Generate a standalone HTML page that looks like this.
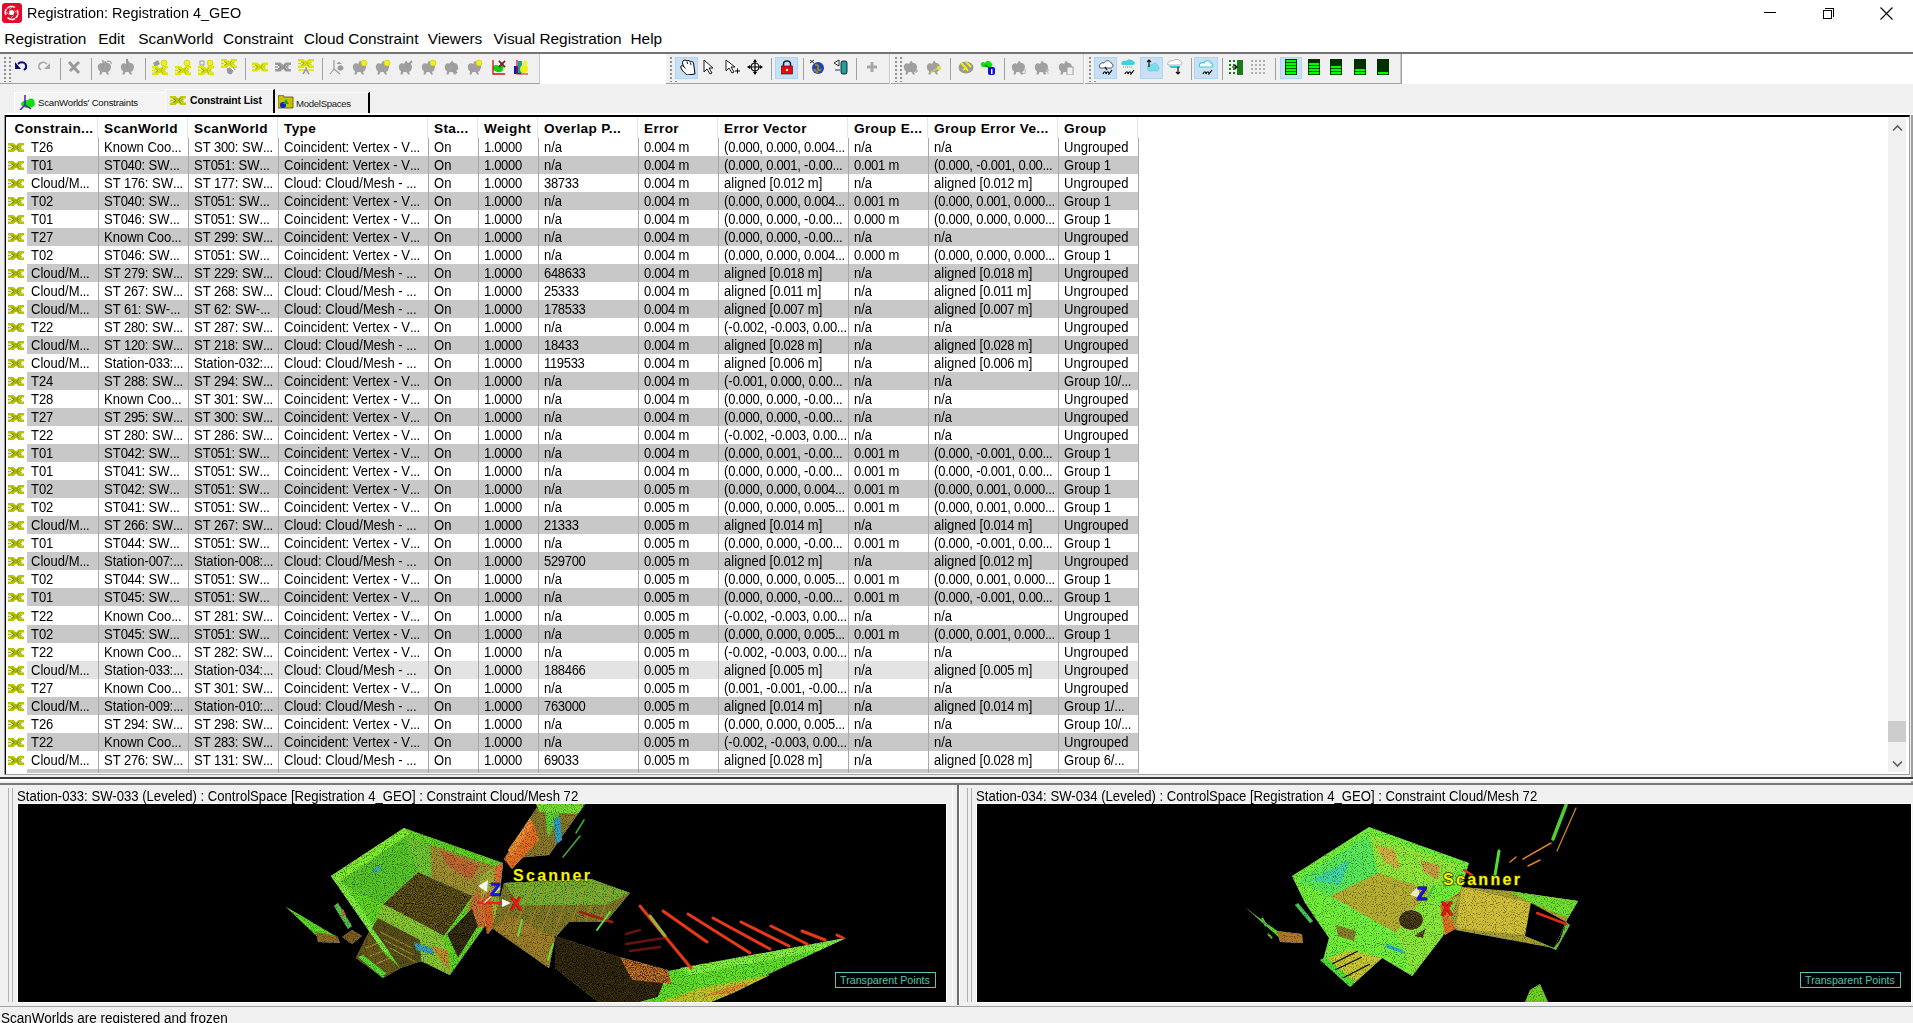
<!DOCTYPE html><html><head><meta charset="utf-8"><title>Registration</title><style>
*{margin:0;padding:0;box-sizing:border-box}
html,body{width:1913px;height:1023px;overflow:hidden;background:#f0f0f0;font-family:"Liberation Sans",sans-serif;color:#000}
.a{position:absolute}
.t{position:absolute;white-space:nowrap;line-height:1}
#rows .t{font-size:14px;color:#000;transform:scaleX(0.93);transform-origin:0 0}
#hdr .t{font-size:13.6px;font-weight:bold;color:#000;letter-spacing:0.35px}
i{font-style:normal;letter-spacing:-0.35px}
</style></head><body>
<div class="a" style="left:0;top:0;width:1913px;height:52px;background:#fff"></div>
<svg class="a" style="left:2px;top:3px" width="20" height="20" viewBox="0 0 20 20"><path d="M2 0 H18 L20 2 V18 L18 20 H2 L0 18 V2Z" fill="#e8082a"/><circle cx="9.5" cy="9.5" r="2.6" fill="#fff"/><path d="M5 5.5 A6 6 0 0 1 13 4.5 M15 7 A6.2 6.2 0 0 1 13.5 15 M13 15.5 A6 6 0 0 1 5.5 14.5 M3.8 12 A6 6 0 0 1 4.5 6" fill="none" stroke="#fff" stroke-width="1.5"/><path d="M7.5 6.5 L10 4 M12.5 7.5 L14.5 10 M11.5 12.5 L9 15 M6.5 11.5 L4.5 9" stroke="#f8c0c8" stroke-width="1"/></svg>
<div class="t" style="left:27px;top:5px;font-size:15px;color:#000;transform:scaleX(0.962);transform-origin:0 0">Registration: Registration 4_GEO</div>
<div class="a" style="left:1764px;top:12px;width:12px;height:1px;background:#000"></div>
<div class="a" style="left:1823px;top:10px;width:9px;height:9px;border:1px solid #000;background:#fff"></div>
<div class="a" style="left:1825px;top:8px;width:9px;height:9px;border-top:1px solid #000;border-right:1px solid #000"></div>
<svg class="a" style="left:1880px;top:7px" width="13" height="13"><path d="M0.5 0.5L12.5 12.5M12.5 0.5L0.5 12.5" stroke="#000" stroke-width="1.1"/></svg>
<div class="t" style="left:4.3px;top:31px;font-size:15.4px;color:#000">Registration</div>
<div class="t" style="left:98.3px;top:31px;font-size:15.4px;color:#000">Edit</div>
<div class="t" style="left:138.3px;top:31px;font-size:15.4px;color:#000">ScanWorld</div>
<div class="t" style="left:223.10000000000002px;top:31px;font-size:15.4px;color:#000">Constraint</div>
<div class="t" style="left:303.8px;top:31px;font-size:15.4px;color:#000">Cloud Constraint</div>
<div class="t" style="left:427.8px;top:31px;font-size:15.4px;color:#000">Viewers</div>
<div class="t" style="left:493.5px;top:31px;font-size:15.4px;color:#000">Visual Registration</div>
<div class="t" style="left:630.5px;top:31px;font-size:15.4px;color:#000">Help</div>
<div class="a" style="left:0;top:52px;width:1913px;height:2px;background:#747474"></div>
<div class="a" style="left:0;top:54px;width:1913px;height:30px;background:#fff"></div>
<div class="a" style="left:0px;top:54px;width:540px;height:30px;background:#f0f0f0;border-bottom:1px solid #a0a0a0;border-right:1px solid #c8c8c8"></div>
<div class="a" style="left:4px;top:57px;width:8px;height:25px;background-image:radial-gradient(circle at 1px 1px,#909090 0.9px,transparent 1.2px);background-size:5px 4px"></div>
<div class="a" style="left:666px;top:54px;width:224px;height:30px;background:#f0f0f0;border-bottom:1px solid #a0a0a0;border-right:1px solid #c8c8c8"></div>
<div class="a" style="left:670px;top:57px;width:8px;height:25px;background-image:radial-gradient(circle at 1px 1px,#909090 0.9px,transparent 1.2px);background-size:5px 4px"></div>
<div class="a" style="left:891px;top:54px;width:193px;height:30px;background:#f0f0f0;border-bottom:1px solid #a0a0a0;border-right:1px solid #c8c8c8"></div>
<div class="a" style="left:895px;top:57px;width:8px;height:25px;background-image:radial-gradient(circle at 1px 1px,#909090 0.9px,transparent 1.2px);background-size:5px 4px"></div>
<div class="a" style="left:1085px;top:54px;width:316px;height:30px;background:#f0f0f0;border-bottom:1px solid #a0a0a0;border-right:1px solid #c8c8c8"></div>
<div class="a" style="left:1089px;top:57px;width:8px;height:25px;background-image:radial-gradient(circle at 1px 1px,#909090 0.9px,transparent 1.2px);background-size:5px 4px"></div>
<div class="a" style="left:1401px;top:54px;width:1px;height:30px;background:#a0a0a0"></div>
<div class="a" style="left:60px;top:58px;width:1px;height:22px;background:#a0a0a0"></div>
<div class="a" style="left:91px;top:58px;width:1px;height:22px;background:#a0a0a0"></div>
<div class="a" style="left:145px;top:58px;width:1px;height:22px;background:#a0a0a0"></div>
<div class="a" style="left:245px;top:58px;width:1px;height:22px;background:#a0a0a0"></div>
<div class="a" style="left:322px;top:58px;width:1px;height:22px;background:#a0a0a0"></div>
<div class="a" style="left:771px;top:58px;width:1px;height:22px;background:#a0a0a0"></div>
<div class="a" style="left:803px;top:58px;width:1px;height:22px;background:#a0a0a0"></div>
<div class="a" style="left:856px;top:58px;width:1px;height:22px;background:#a0a0a0"></div>
<div class="a" style="left:950px;top:58px;width:1px;height:22px;background:#a0a0a0"></div>
<div class="a" style="left:1004px;top:58px;width:1px;height:22px;background:#a0a0a0"></div>
<div class="a" style="left:1191px;top:58px;width:1px;height:22px;background:#a0a0a0"></div>
<div class="a" style="left:1222px;top:58px;width:1px;height:22px;background:#a0a0a0"></div>
<div class="a" style="left:1275px;top:58px;width:1px;height:22px;background:#a0a0a0"></div>
<div class="a" style="left:675px;top:57px;width:23px;height:22px;background:#c8e0f6;border:1px solid #b0d4f2"></div>
<div class="a" style="left:775px;top:57px;width:23px;height:22px;background:#c8e0f6;border:1px solid #b0d4f2"></div>
<div class="a" style="left:1094px;top:57px;width:23px;height:22px;background:#c8e0f6;border:1px solid #b0d4f2"></div>
<div class="a" style="left:1140px;top:57px;width:23px;height:22px;background:#c8e0f6;border:1px solid #b0d4f2"></div>
<div class="a" style="left:1194px;top:57px;width:24px;height:22px;background:#c8e0f6;border:1px solid #b0d4f2"></div>
<div class="a" style="left:1280px;top:57px;width:22px;height:22px;background:#c8e0f6;border:1px solid #b0d4f2"></div>
<svg class="a" style="left:13px;top:59px" width="16" height="16" viewBox="0 0 16 16"><path d="M5 5 C8 2 14 3 13 9 L11 11" stroke="#0a0a80" stroke-width="2" fill="none"/><path d="M2 3 L2 10 L8 10 Z" fill="#0a0a80"/></svg>
<svg class="a" style="left:36px;top:59px" width="16" height="16" viewBox="0 0 16 16"><path d="M11 5 C8 2 2 3 3 9 L5 11" stroke="#a8a8a8" stroke-width="1.6" fill="none"/><path d="M14 4 L14 10 L8 10 Z" fill="#a8a8a8"/></svg>
<svg class="a" style="left:66px;top:59px" width="16" height="16" viewBox="0 0 16 16"><path d="M3 3 L13 14 M13 3 L6 10 L4 12" stroke="#9a9a9a" stroke-width="3" fill="none"/></svg>
<svg class="a" style="left:97px;top:59px" width="16" height="16" viewBox="0 0 16 16"><path d="M1 9 C0 5 4 3 6 5 L8 1.5 L10 4 C13 3.5 15 7 13.5 10 C13 12 12 12.5 11 13 L12 15.5 L10 15.5 L8.5 13 L5.5 13 L4.5 15.5 L2.5 15.5 L3 12 C1.5 11.5 1 10 1 9Z" fill="#a0a0a0"/><path d="M10 3 C12 1 15 3 14 5" stroke="#9a9a9a" stroke-width="1.2" fill="none"/><path d="M6 1 L6 8" stroke="#9a9a9a" stroke-width="1.5"/></svg>
<svg class="a" style="left:120px;top:59px" width="16" height="16" viewBox="0 0 16 16"><path d="M1 9 C0 5 4 3 6 5 L8 1.5 L10 4 C13 3.5 15 7 13.5 10 C13 12 12 12.5 11 13 L12 15.5 L10 15.5 L8.5 13 L5.5 13 L4.5 15.5 L2.5 15.5 L3 12 C1.5 11.5 1 10 1 9Z" fill="#a0a0a0"/><path d="M7 0 L7 8" stroke="#9a9a9a" stroke-width="2"/></svg>
<svg class="a" style="left:152px;top:59px" width="16" height="16" viewBox="0 0 16 16"><path d="M1 4 L6 1 L8 5 L3 8 Z" fill="#9a9a9a"/><circle cx="12" cy="4" r="3" fill="#f0f020" stroke="#c8c800" stroke-width="0.6"/><g transform="translate(0,7)"><path d="M0 1.2h5l3 3.3l3-3.3h5M0 7.8h5l3-3.3l3 3.3h5" stroke="#dce800" stroke-width="2.4" fill="none"/><path d="M0 4.5h3M3.5 2.3l3 2.2l-3 2.2M6.5 2.3l3 2.2l-3 2.2M13.5 2.8l-2.5 1.7l2.5 1.7" stroke="#d0dc00" stroke-width="1.7" fill="none"/><path d="M3 2.5l3 2l-3 2M11 1.5l-2 3l2 3" stroke="#8a9000" stroke-width="0.6" fill="none"/></g></svg>
<svg class="a" style="left:175px;top:59px" width="16" height="16" viewBox="0 0 16 16"><circle cx="12" cy="4" r="3" fill="#f0f020" stroke="#c8c800" stroke-width="0.6"/><g transform="translate(0,7)"><path d="M0 1.2h5l3 3.3l3-3.3h5M0 7.8h5l3-3.3l3 3.3h5" stroke="#dce800" stroke-width="2.4" fill="none"/><path d="M0 4.5h3M3.5 2.3l3 2.2l-3 2.2M6.5 2.3l3 2.2l-3 2.2M13.5 2.8l-2.5 1.7l2.5 1.7" stroke="#d0dc00" stroke-width="1.7" fill="none"/><path d="M3 2.5l3 2l-3 2M11 1.5l-2 3l2 3" stroke="#8a9000" stroke-width="0.6" fill="none"/></g></svg>
<svg class="a" style="left:198px;top:59px" width="16" height="16" viewBox="0 0 16 16"><rect x="2" y="2" width="4" height="4" fill="none" stroke="#9a9a9a"/><circle cx="12" cy="4" r="3" fill="#f0f020" stroke="#c8c800" stroke-width="0.6"/><g transform="translate(0,7)"><path d="M0 1.2h5l3 3.3l3-3.3h5M0 7.8h5l3-3.3l3 3.3h5" stroke="#dce800" stroke-width="2.4" fill="none"/><path d="M0 4.5h3M3.5 2.3l3 2.2l-3 2.2M6.5 2.3l3 2.2l-3 2.2M13.5 2.8l-2.5 1.7l2.5 1.7" stroke="#d0dc00" stroke-width="1.7" fill="none"/><path d="M3 2.5l3 2l-3 2M11 1.5l-2 3l2 3" stroke="#8a9000" stroke-width="0.6" fill="none"/></g></svg>
<svg class="a" style="left:221px;top:59px" width="16" height="16" viewBox="0 0 16 16"><path d="M0 1.2h5l3 3.3l3-3.3h5M0 7.8h5l3-3.3l3 3.3h5" stroke="#dce800" stroke-width="2.4" fill="none"/><path d="M0 4.5h3M3.5 2.3l3 2.2l-3 2.2M6.5 2.3l3 2.2l-3 2.2M13.5 2.8l-2.5 1.7l2.5 1.7" stroke="#d0dc00" stroke-width="1.7" fill="none"/><path d="M3 2.5l3 2l-3 2M11 1.5l-2 3l2 3" stroke="#8a9000" stroke-width="0.6" fill="none"/><path d="M6 10 L9 9 L12 12 L10 15 L7 14 Z M12 8 L14 11" fill="#9a9a9a" stroke="#9a9a9a"/></svg>
<svg class="a" style="left:252px;top:59px" width="16" height="16" viewBox="0 0 16 16"><g transform="translate(0,3.5)"><path d="M0 1.2h5l3 3.3l3-3.3h5M0 7.8h5l3-3.3l3 3.3h5" stroke="#dce800" stroke-width="2.4" fill="none"/><path d="M0 4.5h3M3.5 2.3l3 2.2l-3 2.2M6.5 2.3l3 2.2l-3 2.2M13.5 2.8l-2.5 1.7l2.5 1.7" stroke="#d0dc00" stroke-width="1.7" fill="none"/><path d="M3 2.5l3 2l-3 2M11 1.5l-2 3l2 3" stroke="#8a9000" stroke-width="0.6" fill="none"/></g></svg>
<svg class="a" style="left:275px;top:59px" width="16" height="16" viewBox="0 0 16 16"><g transform="translate(0,3.5)"><path d="M0 1.2h5l3 3.3l3-3.3h5M0 7.8h5l3-3.3l3 3.3h5" stroke="#9a9a9a" stroke-width="2.4" fill="none"/><path d="M0 4.5h3M3.5 2.3l3 2.2l-3 2.2M6.5 2.3l3 2.2l-3 2.2M13.5 2.8l-2.5 1.7l2.5 1.7" stroke="#9a9a9a" stroke-width="1.7" fill="none"/><path d="M3 2.5l3 2l-3 2M11 1.5l-2 3l2 3" stroke="#707070" stroke-width="0.6" fill="none"/></g></svg>
<svg class="a" style="left:298px;top:59px" width="16" height="16" viewBox="0 0 16 16"><path d="M0 1.2h5l3 3.3l3-3.3h5M0 7.8h5l3-3.3l3 3.3h5" stroke="#dce800" stroke-width="2.4" fill="none"/><path d="M0 4.5h3M3.5 2.3l3 2.2l-3 2.2M6.5 2.3l3 2.2l-3 2.2M13.5 2.8l-2.5 1.7l2.5 1.7" stroke="#d0dc00" stroke-width="1.7" fill="none"/><path d="M3 2.5l3 2l-3 2M11 1.5l-2 3l2 3" stroke="#8a9000" stroke-width="0.6" fill="none"/><path d="M0 11h16" stroke="#dce800" stroke-width="1.5"/><path d="M5 15 L8 10 L11 15 M8 10 L8 8" stroke="#9a9a9a" stroke-width="1.5" fill="none"/></svg>
<svg class="a" style="left:329px;top:59px" width="16" height="16" viewBox="0 0 16 16"><path d="M5 1 L5 10 L1 15 M5 10 L11 15" stroke="#9a9a9a" stroke-width="1.2" fill="none"/><path d="M9 9 C9 6 14 6 14 9 C14 12 9 12 9 9Z M8 5 C9 3 11 3 12 5" fill="#9a9a9a" stroke="#9a9a9a"/></svg>
<svg class="a" style="left:352px;top:59px" width="16" height="16" viewBox="0 0 16 16"><path d="M1 9 C0 5 4 3 6 5 L8 1.5 L10 4 C13 3.5 15 7 13.5 10 C13 12 12 12.5 11 13 L12 15.5 L10 15.5 L8.5 13 L5.5 13 L4.5 15.5 L2.5 15.5 L3 12 C1.5 11.5 1 10 1 9Z" fill="#a0a0a0"/><circle cx="12" cy="4" r="3" fill="#f0f020" stroke="#c8c800" stroke-width="0.6"/></svg>
<svg class="a" style="left:375px;top:59px" width="16" height="16" viewBox="0 0 16 16"><path d="M1 9 C0 5 4 3 6 5 L8 1.5 L10 4 C13 3.5 15 7 13.5 10 C13 12 12 12.5 11 13 L12 15.5 L10 15.5 L8.5 13 L5.5 13 L4.5 15.5 L2.5 15.5 L3 12 C1.5 11.5 1 10 1 9Z" fill="#a0a0a0"/><circle cx="12" cy="4" r="3" fill="#f0f020" stroke="#c8c800" stroke-width="0.6"/></svg>
<svg class="a" style="left:421px;top:59px" width="16" height="16" viewBox="0 0 16 16"><path d="M1 9 C0 5 4 3 6 5 L8 1.5 L10 4 C13 3.5 15 7 13.5 10 C13 12 12 12.5 11 13 L12 15.5 L10 15.5 L8.5 13 L5.5 13 L4.5 15.5 L2.5 15.5 L3 12 C1.5 11.5 1 10 1 9Z" fill="#a0a0a0"/><circle cx="12" cy="4" r="3" fill="#f0f020" stroke="#c8c800" stroke-width="0.6"/></svg>
<svg class="a" style="left:467px;top:59px" width="16" height="16" viewBox="0 0 16 16"><path d="M1 9 C0 5 4 3 6 5 L8 1.5 L10 4 C13 3.5 15 7 13.5 10 C13 12 12 12.5 11 13 L12 15.5 L10 15.5 L8.5 13 L5.5 13 L4.5 15.5 L2.5 15.5 L3 12 C1.5 11.5 1 10 1 9Z" fill="#a0a0a0"/><circle cx="12" cy="4" r="3" fill="#f0f020" stroke="#c8c800" stroke-width="0.6"/></svg>
<svg class="a" style="left:398px;top:59px" width="16" height="16" viewBox="0 0 16 16"><path d="M1 9 C0 5 4 3 6 5 L8 1.5 L10 4 C13 3.5 15 7 13.5 10 C13 12 12 12.5 11 13 L12 15.5 L10 15.5 L8.5 13 L5.5 13 L4.5 15.5 L2.5 15.5 L3 12 C1.5 11.5 1 10 1 9Z" fill="#a0a0a0"/><path d="M8 8 L14 2" stroke="#9a9a9a" stroke-width="2"/></svg>
<svg class="a" style="left:444px;top:59px" width="16" height="16" viewBox="0 0 16 16"><path d="M1 9 C0 5 4 3 6 5 L8 1.5 L10 4 C13 3.5 15 7 13.5 10 C13 12 12 12.5 11 13 L12 15.5 L10 15.5 L8.5 13 L5.5 13 L4.5 15.5 L2.5 15.5 L3 12 C1.5 11.5 1 10 1 9Z" fill="#a0a0a0"/><path d="M6 4 L14 10 M8 10 L13 14" stroke="#9a9a9a" stroke-width="2"/></svg>
<svg class="a" style="left:490px;top:59px" width="16" height="16" viewBox="0 0 16 16"><path d="M3 10 C2 6 7 5 9 7 C11 4 15 7 13 11 C12 14 5 14 3 10Z" fill="#10d010"/><path d="M3 1 L3 15 L15 15 M9 2 L15 8 M15 2 L9 8" stroke="#d01010" stroke-width="1.3" fill="none"/><path d="M9 2 L15 8 M15 2 L9 8" stroke="#702020" stroke-width="1.6"/></svg>
<svg class="a" style="left:513px;top:59px" width="16" height="16" viewBox="0 0 16 16"><rect x="1" y="7" width="7" height="8" fill="#1010c0"/><rect x="5" y="2" width="4" height="12" fill="#10a0a0"/><circle cx="11" cy="10" r="4" fill="#f0f010"/><circle cx="12" cy="4" r="2.5" fill="#f0f040"/><path d="M4 1 L4 15 L15 15" stroke="#d01010" stroke-width="1.2" fill="none"/></svg>
<svg class="a" style="left:680px;top:59px" width="16" height="16" viewBox="0 0 16 16"><path d="M7 16 C5 14 2 12 1 9 C0 7 2 6 3 7 L4 8 C3 6 2 4 3 2 C4 0.5 6 1 7 2 C8 1 10 1.5 10.5 3 C11.5 2 13 2.5 13.5 4 L15 15 Z" fill="#fff" stroke="#000" stroke-width="1"/><path d="M4 8 L5.5 9.5 M7 2.5 L7.5 5 M10.5 3.5 L11 6" stroke="#000" stroke-width="0.9"/></svg>
<svg class="a" style="left:701px;top:59px" width="16" height="16" viewBox="0 0 16 16"><path d="M3 1 L3 13 L6 10 L9 15 L11 14 L8 9 L12 9 Z" fill="#fff" stroke="#000" stroke-width="0.9"/></svg>
<svg class="a" style="left:724px;top:59px" width="16" height="16" viewBox="0 0 16 16"><path d="M2 1 L2 12 L5 9 L8 14 L10 13 L7 8 L11 8 Z" fill="#fff" stroke="#000" stroke-width="0.9"/><path d="M11 12h5M13.5 9.5v5" stroke="#000" stroke-width="1"/></svg>
<svg class="a" style="left:747px;top:59px" width="16" height="16" viewBox="0 0 16 16"><path d="M8 1 L8 15 M1 8 L15 8" stroke="#000" stroke-width="1.2"/><path d="M8 0 L10 3 L6 3Z M8 16 L10 13 L6 13Z M0 8 L3 6 L3 10Z M16 8 L13 6 L13 10Z" fill="#000"/><circle cx="8" cy="8" r="4" fill="none" stroke="#000" stroke-width="1.2"/></svg>
<svg class="a" style="left:779px;top:59px" width="16" height="16" viewBox="0 0 16 16"><path d="M4.5 7 L4.5 5 C4.5 1 11.5 1 11.5 5 L11.5 7" stroke="#222" stroke-width="1.6" fill="none"/><rect x="2.5" y="7" width="11" height="8" fill="#e01010" stroke="#400" stroke-width="0.6"/><rect x="7" y="10" width="2" height="2" fill="#fff"/></svg>
<svg class="a" style="left:809px;top:59px" width="16" height="16" viewBox="0 0 16 16"><circle cx="9" cy="9" r="6" fill="#2040c0"/><path d="M6 6 C8 5 10 7 9 9 C8 11 11 12 12 10 M5 10 C6 12 8 13 9 14" stroke="#909020" stroke-width="2" fill="none"/><path d="M1 1 L5 4 M1 4 L5 1" stroke="#000" stroke-width="0.8"/></svg>
<svg class="a" style="left:833px;top:59px" width="16" height="16" viewBox="0 0 16 16"><rect x="8" y="2" width="6" height="13" rx="2" fill="#20a0a0" stroke="#000" stroke-width="0.8"/><path d="M1 4 L6 1 L6 7Z M2 11 L7 11" stroke="#000" stroke-width="0.8" fill="none"/></svg>
<svg class="a" style="left:864px;top:59px" width="16" height="16" viewBox="0 0 16 16"><path d="M8 3 L8 13 M3 8 L13 8" stroke="#a8a8a8" stroke-width="3"/></svg>
<svg class="a" style="left:903px;top:59px" width="16" height="16" viewBox="0 0 16 16"><path d="M1 9 C0 5 4 3 6 5 L8 1.5 L10 4 C13 3.5 15 7 13.5 10 C13 12 12 12.5 11 13 L12 15.5 L10 15.5 L8.5 13 L5.5 13 L4.5 15.5 L2.5 15.5 L3 12 C1.5 11.5 1 10 1 9Z" fill="#a0a0a0"/><path d="M11 12h4M13 10v4" stroke="#a0a0a0" stroke-width="1"/></svg>
<svg class="a" style="left:926px;top:59px" width="16" height="16" viewBox="0 0 16 16"><path d="M1 9 C0 5 4 3 6 5 L8 1.5 L10 4 C13 3.5 15 7 13.5 10 C13 12 12 12.5 11 13 L12 15.5 L10 15.5 L8.5 13 L5.5 13 L4.5 15.5 L2.5 15.5 L3 12 C1.5 11.5 1 10 1 9Z" fill="#a0a0a0"/><path d="M4 14 L12 9" stroke="#c8c860" stroke-width="1.5"/><circle cx="13" cy="9" r="2.2" fill="#e0e040"/></svg>
<svg class="a" style="left:958px;top:59px" width="16" height="16" viewBox="0 0 16 16"><ellipse cx="8" cy="8.5" rx="7.5" ry="6" fill="#9a9a9a"/><path d="M3 4 L8 9 M8 3 L13 8 M5 11 L8 9 L10 12" stroke="#f0f000" stroke-width="1.8" fill="none"/></svg>
<svg class="a" style="left:980px;top:59px" width="16" height="16" viewBox="0 0 16 16"><path d="M1 6 C0 3 4 2 5 4 C6 1 10 1 11 4 C13 4 13 7 11 8 L3 8 C1 8 1 6 1 6Z" fill="#10e010"/><path d="M5 6 L9 9" stroke="#000" stroke-width="1"/><rect x="8" y="8" width="7" height="8" rx="2" fill="#1010d0"/><rect x="11" y="10" width="1.5" height="5" fill="#fff"/></svg>
<svg class="a" style="left:1011px;top:59px" width="16" height="16" viewBox="0 0 16 16"><path d="M1 9 C0 5 4 3 6 5 L8 1.5 L10 4 C13 3.5 15 7 13.5 10 C13 12 12 12.5 11 13 L12 15.5 L10 15.5 L8.5 13 L5.5 13 L4.5 15.5 L2.5 15.5 L3 12 C1.5 11.5 1 10 1 9Z" fill="#a0a0a0"/><text x="10" y="15" font-size="7" fill="#a0a0a0" font-family="Liberation Sans">U</text></svg>
<svg class="a" style="left:1034px;top:59px" width="16" height="16" viewBox="0 0 16 16"><path d="M1 9 C0 5 4 3 6 5 L8 1.5 L10 4 C13 3.5 15 7 13.5 10 C13 12 12 12.5 11 13 L12 15.5 L10 15.5 L8.5 13 L5.5 13 L4.5 15.5 L2.5 15.5 L3 12 C1.5 11.5 1 10 1 9Z" fill="#a0a0a0"/><text x="10" y="15" font-size="7" fill="#a0a0a0" font-family="Liberation Sans">R</text></svg>
<svg class="a" style="left:1058px;top:59px" width="16" height="16" viewBox="0 0 16 16"><path d="M1 9 C0 5 4 3 6 5 L8 1.5 L10 4 C13 3.5 15 7 13.5 10 C13 12 12 12.5 11 13 L12 15.5 L10 15.5 L8.5 13 L5.5 13 L4.5 15.5 L2.5 15.5 L3 12 C1.5 11.5 1 10 1 9Z" fill="#a0a0a0"/><rect x="9" y="8" width="6" height="8" fill="#f0f0f0" stroke="#a0a0a0"/></svg>
<svg class="a" style="left:1098px;top:59px" width="16" height="16" viewBox="0 0 16 16"><path d="M2 9 C0 6 3 3 6 4 C7 1 12 1 13 4 C16 5 15 9 13 9 Z" fill="#fff" stroke="#555" stroke-width="1"/><path d="M7 8 L9 11 M5 15 C6 12 8 12 8 15 C9 12 11 12 11 15 L14 11" stroke="#000" stroke-width="1.2" fill="none"/></svg>
<svg class="a" style="left:1120px;top:59px" width="16" height="16" viewBox="0 0 16 16"><path d="M2 6 C0 3 3 1 6 2 C7 0 12 0 13 2 C16 3 15 6 13 6 Z" fill="#40d0e0"/><path d="M3 8 L13 8" stroke="#888" stroke-dasharray="1 1"/><path d="M5 15 C6 12 8 12 8 15 C9 12 11 12 11 15 L14 11" stroke="#000" stroke-width="1.2" fill="none"/></svg>
<svg class="a" style="left:1144px;top:59px" width="16" height="16" viewBox="0 0 16 16"><path d="M4 9 C2 7 5 5 8 6 C9 3 14 4 14 7 C16 8 15 12 13 12 L6 12 C3 12 3 10 4 9Z" fill="#70e0f0" stroke="#aaa" stroke-width="0.6"/><path d="M5 1 L5 8 M3 3 L5 1 L7 3" stroke="#000" stroke-width="1.1" fill="none"/></svg>
<svg class="a" style="left:1167px;top:59px" width="16" height="16" viewBox="0 0 16 16"><path d="M1 6 C0 3 3 1 6 2 C7 0 12 0 13 2 C16 3 15 6 13 6 L3 6Z" fill="#fff" stroke="#888" stroke-width="0.6"/><path d="M2 7 L13 7 L13 9 L4 9Z" fill="#30c8d8"/><path d="M11 8 L11 15 M9 13 L11 15 L13 13" stroke="#000" stroke-width="1.1" fill="none"/></svg>
<svg class="a" style="left:1198px;top:59px" width="16" height="16" viewBox="0 0 16 16"><path d="M2 8 C0 5 3 3 6 4 C7 1 12 1 13 4 C16 5 15 8 13 8 Z" fill="#fff" stroke="#40c8d8" stroke-width="1.2"/><path d="M5 15 C6 12 8 12 8 15 C9 12 11 12 11 15 L14 11" stroke="#000" stroke-width="1.2" fill="none"/></svg>
<svg class="a" style="left:1228px;top:59px" width="16" height="16" viewBox="0 0 16 16"><rect x="1" y="1" width="2" height="2" fill="#1a7a1a"/><rect x="1" y="5" width="2" height="2" fill="#1a7a1a"/><rect x="1" y="9" width="2" height="2" fill="#1a7a1a"/><rect x="1" y="13" width="2" height="2" fill="#1a7a1a"/><rect x="5" y="1" width="2" height="2" fill="#1a7a1a"/><rect x="5" y="5" width="2" height="2" fill="#1a7a1a"/><rect x="5" y="9" width="2" height="2" fill="#1a7a1a"/><rect x="5" y="13" width="2" height="2" fill="#1a7a1a"/><rect x="9" y="1" width="2" height="2" fill="#1a7a1a"/><rect x="9" y="5" width="2" height="2" fill="#1a7a1a"/><rect x="9" y="9" width="2" height="2" fill="#1a7a1a"/><rect x="9" y="13" width="2" height="2" fill="#1a7a1a"/><rect x="13" y="1" width="2" height="2" fill="#1a7a1a"/><rect x="13" y="5" width="2" height="2" fill="#1a7a1a"/><rect x="13" y="9" width="2" height="2" fill="#1a7a1a"/><rect x="13" y="13" width="2" height="2" fill="#1a7a1a"/><rect x="9" y="1" width="6" height="15" fill="#1a7a1a"/><path d="M4 8 L9 8 M7 6 L9 8 L7 10" stroke="#000" stroke-width="1.1" fill="none"/></svg>
<svg class="a" style="left:1250px;top:59px" width="16" height="16" viewBox="0 0 16 16"><rect x="1" y="1" width="2" height="2" fill="#b0b0b0"/><rect x="1" y="5" width="2" height="2" fill="#b0b0b0"/><rect x="1" y="9" width="2" height="2" fill="#b0b0b0"/><rect x="1" y="13" width="2" height="2" fill="#b0b0b0"/><rect x="5" y="1" width="2" height="2" fill="#b0b0b0"/><rect x="5" y="5" width="2" height="2" fill="#b0b0b0"/><rect x="5" y="9" width="2" height="2" fill="#b0b0b0"/><rect x="5" y="13" width="2" height="2" fill="#b0b0b0"/><rect x="9" y="1" width="2" height="2" fill="#b0b0b0"/><rect x="9" y="5" width="2" height="2" fill="#b0b0b0"/><rect x="9" y="9" width="2" height="2" fill="#b0b0b0"/><rect x="9" y="13" width="2" height="2" fill="#b0b0b0"/><rect x="13" y="1" width="2" height="2" fill="#b0b0b0"/><rect x="13" y="5" width="2" height="2" fill="#b0b0b0"/><rect x="13" y="9" width="2" height="2" fill="#b0b0b0"/><rect x="13" y="13" width="2" height="2" fill="#b0b0b0"/></svg>
<svg class="a" style="left:1283px;top:59px" width="16" height="16" viewBox="0 0 16 16"><rect x="2" y="0" width="12" height="16" fill="#003300"/><rect x="3" y="1" width="10" height="2.2" fill="#00ff00"/><rect x="3" y="4" width="10" height="2.2" fill="#00ff00"/><rect x="3" y="7" width="10" height="2.2" fill="#00ff00"/><rect x="3" y="10" width="10" height="2.2" fill="#00ff00"/><rect x="3" y="13" width="10" height="2.2" fill="#00ff00"/></svg>
<svg class="a" style="left:1306px;top:59px" width="16" height="16" viewBox="0 0 16 16"><rect x="2" y="0" width="12" height="16" fill="#003300"/><rect x="3" y="1" width="10" height="2.2" fill="#003000"/><rect x="3" y="4" width="10" height="2.2" fill="#00ff00"/><rect x="3" y="7" width="10" height="2.2" fill="#00ff00"/><rect x="3" y="10" width="10" height="2.2" fill="#00ff00"/><rect x="3" y="13" width="10" height="2.2" fill="#00ff00"/></svg>
<svg class="a" style="left:1328px;top:59px" width="16" height="16" viewBox="0 0 16 16"><rect x="2" y="0" width="12" height="16" fill="#003300"/><rect x="3" y="1" width="10" height="2.2" fill="#003000"/><rect x="3" y="4" width="10" height="2.2" fill="#003000"/><rect x="3" y="7" width="10" height="2.2" fill="#00ff00"/><rect x="3" y="10" width="10" height="2.2" fill="#00ff00"/><rect x="3" y="13" width="10" height="2.2" fill="#00ff00"/></svg>
<svg class="a" style="left:1352px;top:59px" width="16" height="16" viewBox="0 0 16 16"><rect x="2" y="0" width="12" height="16" fill="#003300"/><rect x="3" y="1" width="10" height="2.2" fill="#003000"/><rect x="3" y="4" width="10" height="2.2" fill="#003000"/><rect x="3" y="7" width="10" height="2.2" fill="#003000"/><rect x="3" y="10" width="10" height="2.2" fill="#00ff00"/><rect x="3" y="13" width="10" height="2.2" fill="#00ff00"/></svg>
<svg class="a" style="left:1375px;top:59px" width="16" height="16" viewBox="0 0 16 16"><rect x="2" y="0" width="12" height="16" fill="#003300"/><rect x="3" y="1" width="10" height="2.2" fill="#003000"/><rect x="3" y="4" width="10" height="2.2" fill="#003000"/><rect x="3" y="7" width="10" height="2.2" fill="#003000"/><rect x="3" y="10" width="10" height="2.2" fill="#003000"/><rect x="3" y="13" width="10" height="2.2" fill="#00ff00"/></svg>
<div class="a" style="left:0;top:84px;width:1913px;height:31px;background:#f0f0f0"></div>
<div class="a" style="left:14px;top:92px;width:150px;height:23px;background:#f4f4f4;border-left:1px solid #fff;border-top:1px solid #fff"></div>
<div class="a" style="left:165px;top:89px;width:110px;height:26px;background:#f0f0f0;border-left:1px solid #fff;border-top:1px solid #fff;border-right:2px solid #000"></div>
<div class="a" style="left:275px;top:92px;width:95px;height:23px;background:#f0f0f0;border-top:1px solid #fff;border-right:2px solid #000"></div>
<svg class="a" style="left:19px;top:94px" width="16" height="16" viewBox="0 0 16 16"><ellipse cx="9" cy="10" rx="7" ry="4" fill="#10e010"/><circle cx="12" cy="8" r="3.5" fill="#10e010"/><path d="M6 1 L6 11 L1 16 M6 11 L12 15" stroke="#6010c0" stroke-width="1.5" fill="none"/></svg>
<div class="t" style="left:38px;top:98px;font-size:9.6px;color:#111;letter-spacing:-0.2px">ScanWorlds' Constraints</div>
<svg class="a" style="left:170px;top:96px" width="16" height="9" viewBox="0 0 16 9"><path d="M0 1.2h5l3 3.3l3-3.3h5M0 7.8h5l3-3.3l3 3.3h5" stroke="#c0cc00" stroke-width="2.4" fill="none"/><path d="M0 4.5h3M3.5 2.3l3 2.2l-3 2.2M6.5 2.3l3 2.2l-3 2.2M13.5 2.8l-2.5 1.7l2.5 1.7" stroke="#b8c400" stroke-width="1.7" fill="none"/><path d="M3 2.5l3 2l-3 2M11 1.5l-2 3l2 3" stroke="#5a6000" stroke-width="0.6" fill="none"/></svg>
<div class="t" style="left:190px;top:96px;font-size:10.4px;font-weight:bold;color:#000;letter-spacing:-0.1px">Constraint List</div>
<svg class="a" style="left:278px;top:95px" width="16" height="14" viewBox="0 0 16 14"><path d="M0 3 L0 13 L15 13 L15 2 L6 2 L5 0 L1 0 Z" fill="#c8c000" stroke="#505000" stroke-width="0.8"/><circle cx="5" cy="10" r="3" fill="#1020d0"/><path d="M8 4 L11 9 L5 9Z" fill="#10b010"/></svg>
<div class="t" style="left:296px;top:99px;font-size:9.6px;color:#222;letter-spacing:-0.3px">ModelSpaces</div>
<div class="a" style="left:4px;top:113px;width:1909px;height:2px;background:#fff"></div>
<div class="a" style="left:4px;top:115px;width:1906px;height:660px;background:#fff;border-top:2px solid #000;border-left:2px solid #000;border-right:1px solid #a0a0a0;border-bottom:1px solid #a0a0a0"></div>
<div class="a" style="left:4px;top:115px;width:1px;height:660px;background:#a0a0a0"></div>
<div class="a" style="left:1911px;top:115px;width:2px;height:670px;background:#a0a0a0"></div>
<div id="hdr">
<div class="t" style="left:14.5px;top:122px">Constrain...</div>
<div class="t" style="left:104px;top:122px">ScanWorld</div>
<div class="t" style="left:194px;top:122px">ScanWorld</div>
<div class="t" style="left:284px;top:122px">Type</div>
<div class="t" style="left:434px;top:122px">Sta...</div>
<div class="t" style="left:484px;top:122px">Weight</div>
<div class="t" style="left:544px;top:122px">Overlap P...</div>
<div class="t" style="left:644px;top:122px">Error</div>
<div class="t" style="left:724px;top:122px">Error Vector</div>
<div class="t" style="left:854px;top:122px">Group E...</div>
<div class="t" style="left:934px;top:122px">Group Error Ve...</div>
<div class="t" style="left:1064px;top:122px">Group</div>
<div class="a" style="left:97px;top:117px;width:1px;height:21px;background:#e5e5e5"></div>
<div class="a" style="left:187px;top:117px;width:1px;height:21px;background:#e5e5e5"></div>
<div class="a" style="left:277px;top:117px;width:1px;height:21px;background:#e5e5e5"></div>
<div class="a" style="left:427px;top:117px;width:1px;height:21px;background:#e5e5e5"></div>
<div class="a" style="left:477px;top:117px;width:1px;height:21px;background:#e5e5e5"></div>
<div class="a" style="left:537px;top:117px;width:1px;height:21px;background:#e5e5e5"></div>
<div class="a" style="left:637px;top:117px;width:1px;height:21px;background:#e5e5e5"></div>
<div class="a" style="left:717px;top:117px;width:1px;height:21px;background:#e5e5e5"></div>
<div class="a" style="left:847px;top:117px;width:1px;height:21px;background:#e5e5e5"></div>
<div class="a" style="left:927px;top:117px;width:1px;height:21px;background:#e5e5e5"></div>
<div class="a" style="left:1057px;top:117px;width:1px;height:21px;background:#e5e5e5"></div>
<div class="a" style="left:1137px;top:117px;width:1px;height:21px;background:#e5e5e5"></div>
</div>
<div id="rows">
<div class="a" style="left:27px;top:156px;width:1111px;height:18px;background:#c8c8c8"></div>
<div class="a" style="left:27px;top:192px;width:1111px;height:18px;background:#c8c8c8"></div>
<div class="a" style="left:27px;top:228px;width:1111px;height:18px;background:#c8c8c8"></div>
<div class="a" style="left:27px;top:264px;width:1111px;height:18px;background:#c8c8c8"></div>
<div class="a" style="left:27px;top:300px;width:1111px;height:18px;background:#c8c8c8"></div>
<div class="a" style="left:27px;top:336px;width:1111px;height:18px;background:#c8c8c8"></div>
<div class="a" style="left:27px;top:372px;width:1111px;height:18px;background:#c8c8c8"></div>
<div class="a" style="left:27px;top:408px;width:1111px;height:18px;background:#c8c8c8"></div>
<div class="a" style="left:27px;top:444px;width:1111px;height:18px;background:#c8c8c8"></div>
<div class="a" style="left:27px;top:480px;width:1111px;height:18px;background:#c8c8c8"></div>
<div class="a" style="left:27px;top:516px;width:1111px;height:18px;background:#c8c8c8"></div>
<div class="a" style="left:27px;top:552px;width:1111px;height:18px;background:#c8c8c8"></div>
<div class="a" style="left:27px;top:588px;width:1111px;height:18px;background:#c8c8c8"></div>
<div class="a" style="left:27px;top:625px;width:1111px;height:18px;background:#c8c8c8"></div>
<div class="a" style="left:27px;top:661px;width:1111px;height:18px;background:#e3e3e3"></div>
<div class="a" style="left:27px;top:697px;width:1111px;height:18px;background:#c8c8c8"></div>
<div class="a" style="left:27px;top:733px;width:1111px;height:18px;background:#c8c8c8"></div>
<div class="a" style="left:27px;top:769px;width:1111px;height:4px;background:#c8c8c8"></div>
</div>
<div class="a" style="left:98px;top:138px;width:1px;height:635px;background:#a8a8a8"></div>
<div class="a" style="left:188px;top:138px;width:1px;height:635px;background:#a8a8a8"></div>
<div class="a" style="left:278px;top:138px;width:1px;height:635px;background:#a8a8a8"></div>
<div class="a" style="left:428px;top:138px;width:1px;height:635px;background:#a8a8a8"></div>
<div class="a" style="left:478px;top:138px;width:1px;height:635px;background:#a8a8a8"></div>
<div class="a" style="left:538px;top:138px;width:1px;height:635px;background:#a8a8a8"></div>
<div class="a" style="left:638px;top:138px;width:1px;height:635px;background:#a8a8a8"></div>
<div class="a" style="left:718px;top:138px;width:1px;height:635px;background:#a8a8a8"></div>
<div class="a" style="left:848px;top:138px;width:1px;height:635px;background:#a8a8a8"></div>
<div class="a" style="left:928px;top:138px;width:1px;height:635px;background:#a8a8a8"></div>
<div class="a" style="left:1058px;top:138px;width:1px;height:635px;background:#a8a8a8"></div>
<div class="a" style="left:1138px;top:138px;width:1px;height:635px;background:#a8a8a8"></div>
<div id="rows">
<svg class="a" style="left:8px;top:143px" width="16" height="9" viewBox="0 0 16 9"><path d="M0 1.2h5l3 3.3l3-3.3h5M0 7.8h5l3-3.3l3 3.3h5" stroke="#b4c400" stroke-width="2.4" fill="none"/><path d="M0 4.5h3M3.5 2.3l3 2.2l-3 2.2M6.5 2.3l3 2.2l-3 2.2M13.5 2.8l-2.5 1.7l2.5 1.7" stroke="#a8b800" stroke-width="1.7" fill="none"/><path d="M3 2.5l3 2l-3 2M11 1.5l-2 3l2 3" stroke="#5a6000" stroke-width="0.6" fill="none"/></svg>
<div class="t" style="left:31px;top:140.4px">T<i>26</i></div>
<div class="t" style="left:104px;top:140.4px">Known Coo<i>...</i></div>
<div class="t" style="left:194px;top:140.4px">ST <i>300</i>: SW<i>...</i></div>
<div class="t" style="left:284px;top:140.4px">Coincident: Vertex - V<i>...</i></div>
<div class="t" style="left:434px;top:140.4px">On</div>
<div class="t" style="left:484px;top:140.4px"><i>1.0000</i></div>
<div class="t" style="left:544px;top:140.4px">n/a</div>
<div class="t" style="left:644px;top:140.4px"><i>0.004</i> m</div>
<div class="t" style="left:724px;top:140.4px">(<i>0.000,</i> <i>0.000,</i> <i>0.004...</i></div>
<div class="t" style="left:854px;top:140.4px">n/a</div>
<div class="t" style="left:934px;top:140.4px">n/a</div>
<div class="t" style="left:1064px;top:140.4px">Ungrouped</div>
<svg class="a" style="left:8px;top:161px" width="16" height="9" viewBox="0 0 16 9"><path d="M0 1.2h5l3 3.3l3-3.3h5M0 7.8h5l3-3.3l3 3.3h5" stroke="#b4c400" stroke-width="2.4" fill="none"/><path d="M0 4.5h3M3.5 2.3l3 2.2l-3 2.2M6.5 2.3l3 2.2l-3 2.2M13.5 2.8l-2.5 1.7l2.5 1.7" stroke="#a8b800" stroke-width="1.7" fill="none"/><path d="M3 2.5l3 2l-3 2M11 1.5l-2 3l2 3" stroke="#5a6000" stroke-width="0.6" fill="none"/></svg>
<div class="t" style="left:31px;top:158.4px">T<i>01</i></div>
<div class="t" style="left:104px;top:158.4px">ST<i>040</i>: SW<i>...</i></div>
<div class="t" style="left:194px;top:158.4px">ST<i>051</i>: SW<i>...</i></div>
<div class="t" style="left:284px;top:158.4px">Coincident: Vertex - V<i>...</i></div>
<div class="t" style="left:434px;top:158.4px">On</div>
<div class="t" style="left:484px;top:158.4px"><i>1.0000</i></div>
<div class="t" style="left:544px;top:158.4px">n/a</div>
<div class="t" style="left:644px;top:158.4px"><i>0.004</i> m</div>
<div class="t" style="left:724px;top:158.4px">(<i>0.000,</i> <i>0.001,</i> -<i>0.00...</i></div>
<div class="t" style="left:854px;top:158.4px"><i>0.001</i> m</div>
<div class="t" style="left:934px;top:158.4px">(<i>0.000,</i> -<i>0.001,</i> <i>0.00...</i></div>
<div class="t" style="left:1064px;top:158.4px">Group <i>1</i></div>
<svg class="a" style="left:8px;top:179px" width="16" height="9" viewBox="0 0 16 9"><path d="M0 1.2h5l3 3.3l3-3.3h5M0 7.8h5l3-3.3l3 3.3h5" stroke="#b4c400" stroke-width="2.4" fill="none"/><path d="M0 4.5h3M3.5 2.3l3 2.2l-3 2.2M6.5 2.3l3 2.2l-3 2.2M13.5 2.8l-2.5 1.7l2.5 1.7" stroke="#a8b800" stroke-width="1.7" fill="none"/><path d="M3 2.5l3 2l-3 2M11 1.5l-2 3l2 3" stroke="#5a6000" stroke-width="0.6" fill="none"/></svg>
<div class="t" style="left:31px;top:176.4px">Cloud/M<i>...</i></div>
<div class="t" style="left:104px;top:176.4px">ST <i>176</i>: SW<i>...</i></div>
<div class="t" style="left:194px;top:176.4px">ST <i>177</i>: SW<i>...</i></div>
<div class="t" style="left:284px;top:176.4px">Cloud: Cloud/Mesh - <i>...</i></div>
<div class="t" style="left:434px;top:176.4px">On</div>
<div class="t" style="left:484px;top:176.4px"><i>1.0000</i></div>
<div class="t" style="left:544px;top:176.4px"><i>38733</i></div>
<div class="t" style="left:644px;top:176.4px"><i>0.004</i> m</div>
<div class="t" style="left:724px;top:176.4px">aligned [<i>0.012</i> m]</div>
<div class="t" style="left:854px;top:176.4px">n/a</div>
<div class="t" style="left:934px;top:176.4px">aligned [<i>0.012</i> m]</div>
<div class="t" style="left:1064px;top:176.4px">Ungrouped</div>
<svg class="a" style="left:8px;top:197px" width="16" height="9" viewBox="0 0 16 9"><path d="M0 1.2h5l3 3.3l3-3.3h5M0 7.8h5l3-3.3l3 3.3h5" stroke="#b4c400" stroke-width="2.4" fill="none"/><path d="M0 4.5h3M3.5 2.3l3 2.2l-3 2.2M6.5 2.3l3 2.2l-3 2.2M13.5 2.8l-2.5 1.7l2.5 1.7" stroke="#a8b800" stroke-width="1.7" fill="none"/><path d="M3 2.5l3 2l-3 2M11 1.5l-2 3l2 3" stroke="#5a6000" stroke-width="0.6" fill="none"/></svg>
<div class="t" style="left:31px;top:194.4px">T<i>02</i></div>
<div class="t" style="left:104px;top:194.4px">ST<i>040</i>: SW<i>...</i></div>
<div class="t" style="left:194px;top:194.4px">ST<i>051</i>: SW<i>...</i></div>
<div class="t" style="left:284px;top:194.4px">Coincident: Vertex - V<i>...</i></div>
<div class="t" style="left:434px;top:194.4px">On</div>
<div class="t" style="left:484px;top:194.4px"><i>1.0000</i></div>
<div class="t" style="left:544px;top:194.4px">n/a</div>
<div class="t" style="left:644px;top:194.4px"><i>0.004</i> m</div>
<div class="t" style="left:724px;top:194.4px">(<i>0.000,</i> <i>0.000,</i> <i>0.004...</i></div>
<div class="t" style="left:854px;top:194.4px"><i>0.001</i> m</div>
<div class="t" style="left:934px;top:194.4px">(<i>0.000,</i> <i>0.001,</i> <i>0.000...</i></div>
<div class="t" style="left:1064px;top:194.4px">Group <i>1</i></div>
<svg class="a" style="left:8px;top:215px" width="16" height="9" viewBox="0 0 16 9"><path d="M0 1.2h5l3 3.3l3-3.3h5M0 7.8h5l3-3.3l3 3.3h5" stroke="#b4c400" stroke-width="2.4" fill="none"/><path d="M0 4.5h3M3.5 2.3l3 2.2l-3 2.2M6.5 2.3l3 2.2l-3 2.2M13.5 2.8l-2.5 1.7l2.5 1.7" stroke="#a8b800" stroke-width="1.7" fill="none"/><path d="M3 2.5l3 2l-3 2M11 1.5l-2 3l2 3" stroke="#5a6000" stroke-width="0.6" fill="none"/></svg>
<div class="t" style="left:31px;top:212.4px">T<i>01</i></div>
<div class="t" style="left:104px;top:212.4px">ST<i>046</i>: SW<i>...</i></div>
<div class="t" style="left:194px;top:212.4px">ST<i>051</i>: SW<i>...</i></div>
<div class="t" style="left:284px;top:212.4px">Coincident: Vertex - V<i>...</i></div>
<div class="t" style="left:434px;top:212.4px">On</div>
<div class="t" style="left:484px;top:212.4px"><i>1.0000</i></div>
<div class="t" style="left:544px;top:212.4px">n/a</div>
<div class="t" style="left:644px;top:212.4px"><i>0.004</i> m</div>
<div class="t" style="left:724px;top:212.4px">(<i>0.000,</i> <i>0.000,</i> -<i>0.00...</i></div>
<div class="t" style="left:854px;top:212.4px"><i>0.000</i> m</div>
<div class="t" style="left:934px;top:212.4px">(<i>0.000,</i> <i>0.000,</i> <i>0.000...</i></div>
<div class="t" style="left:1064px;top:212.4px">Group <i>1</i></div>
<svg class="a" style="left:8px;top:233px" width="16" height="9" viewBox="0 0 16 9"><path d="M0 1.2h5l3 3.3l3-3.3h5M0 7.8h5l3-3.3l3 3.3h5" stroke="#b4c400" stroke-width="2.4" fill="none"/><path d="M0 4.5h3M3.5 2.3l3 2.2l-3 2.2M6.5 2.3l3 2.2l-3 2.2M13.5 2.8l-2.5 1.7l2.5 1.7" stroke="#a8b800" stroke-width="1.7" fill="none"/><path d="M3 2.5l3 2l-3 2M11 1.5l-2 3l2 3" stroke="#5a6000" stroke-width="0.6" fill="none"/></svg>
<div class="t" style="left:31px;top:230.4px">T<i>27</i></div>
<div class="t" style="left:104px;top:230.4px">Known Coo<i>...</i></div>
<div class="t" style="left:194px;top:230.4px">ST <i>299</i>: SW<i>...</i></div>
<div class="t" style="left:284px;top:230.4px">Coincident: Vertex - V<i>...</i></div>
<div class="t" style="left:434px;top:230.4px">On</div>
<div class="t" style="left:484px;top:230.4px"><i>1.0000</i></div>
<div class="t" style="left:544px;top:230.4px">n/a</div>
<div class="t" style="left:644px;top:230.4px"><i>0.004</i> m</div>
<div class="t" style="left:724px;top:230.4px">(<i>0.000,</i> <i>0.000,</i> -<i>0.00...</i></div>
<div class="t" style="left:854px;top:230.4px">n/a</div>
<div class="t" style="left:934px;top:230.4px">n/a</div>
<div class="t" style="left:1064px;top:230.4px">Ungrouped</div>
<svg class="a" style="left:8px;top:251px" width="16" height="9" viewBox="0 0 16 9"><path d="M0 1.2h5l3 3.3l3-3.3h5M0 7.8h5l3-3.3l3 3.3h5" stroke="#b4c400" stroke-width="2.4" fill="none"/><path d="M0 4.5h3M3.5 2.3l3 2.2l-3 2.2M6.5 2.3l3 2.2l-3 2.2M13.5 2.8l-2.5 1.7l2.5 1.7" stroke="#a8b800" stroke-width="1.7" fill="none"/><path d="M3 2.5l3 2l-3 2M11 1.5l-2 3l2 3" stroke="#5a6000" stroke-width="0.6" fill="none"/></svg>
<div class="t" style="left:31px;top:248.4px">T<i>02</i></div>
<div class="t" style="left:104px;top:248.4px">ST<i>046</i>: SW<i>...</i></div>
<div class="t" style="left:194px;top:248.4px">ST<i>051</i>: SW<i>...</i></div>
<div class="t" style="left:284px;top:248.4px">Coincident: Vertex - V<i>...</i></div>
<div class="t" style="left:434px;top:248.4px">On</div>
<div class="t" style="left:484px;top:248.4px"><i>1.0000</i></div>
<div class="t" style="left:544px;top:248.4px">n/a</div>
<div class="t" style="left:644px;top:248.4px"><i>0.004</i> m</div>
<div class="t" style="left:724px;top:248.4px">(<i>0.000,</i> <i>0.000,</i> <i>0.004...</i></div>
<div class="t" style="left:854px;top:248.4px"><i>0.000</i> m</div>
<div class="t" style="left:934px;top:248.4px">(<i>0.000,</i> <i>0.000,</i> <i>0.000...</i></div>
<div class="t" style="left:1064px;top:248.4px">Group <i>1</i></div>
<svg class="a" style="left:8px;top:269px" width="16" height="9" viewBox="0 0 16 9"><path d="M0 1.2h5l3 3.3l3-3.3h5M0 7.8h5l3-3.3l3 3.3h5" stroke="#b4c400" stroke-width="2.4" fill="none"/><path d="M0 4.5h3M3.5 2.3l3 2.2l-3 2.2M6.5 2.3l3 2.2l-3 2.2M13.5 2.8l-2.5 1.7l2.5 1.7" stroke="#a8b800" stroke-width="1.7" fill="none"/><path d="M3 2.5l3 2l-3 2M11 1.5l-2 3l2 3" stroke="#5a6000" stroke-width="0.6" fill="none"/></svg>
<div class="t" style="left:31px;top:266.4px">Cloud/M<i>...</i></div>
<div class="t" style="left:104px;top:266.4px">ST <i>279</i>: SW<i>...</i></div>
<div class="t" style="left:194px;top:266.4px">ST <i>229</i>: SW<i>...</i></div>
<div class="t" style="left:284px;top:266.4px">Cloud: Cloud/Mesh - <i>...</i></div>
<div class="t" style="left:434px;top:266.4px">On</div>
<div class="t" style="left:484px;top:266.4px"><i>1.0000</i></div>
<div class="t" style="left:544px;top:266.4px"><i>648633</i></div>
<div class="t" style="left:644px;top:266.4px"><i>0.004</i> m</div>
<div class="t" style="left:724px;top:266.4px">aligned [<i>0.018</i> m]</div>
<div class="t" style="left:854px;top:266.4px">n/a</div>
<div class="t" style="left:934px;top:266.4px">aligned [<i>0.018</i> m]</div>
<div class="t" style="left:1064px;top:266.4px">Ungrouped</div>
<svg class="a" style="left:8px;top:287px" width="16" height="9" viewBox="0 0 16 9"><path d="M0 1.2h5l3 3.3l3-3.3h5M0 7.8h5l3-3.3l3 3.3h5" stroke="#b4c400" stroke-width="2.4" fill="none"/><path d="M0 4.5h3M3.5 2.3l3 2.2l-3 2.2M6.5 2.3l3 2.2l-3 2.2M13.5 2.8l-2.5 1.7l2.5 1.7" stroke="#a8b800" stroke-width="1.7" fill="none"/><path d="M3 2.5l3 2l-3 2M11 1.5l-2 3l2 3" stroke="#5a6000" stroke-width="0.6" fill="none"/></svg>
<div class="t" style="left:31px;top:284.4px">Cloud/M<i>...</i></div>
<div class="t" style="left:104px;top:284.4px">ST <i>267</i>: SW<i>...</i></div>
<div class="t" style="left:194px;top:284.4px">ST <i>268</i>: SW<i>...</i></div>
<div class="t" style="left:284px;top:284.4px">Cloud: Cloud/Mesh - <i>...</i></div>
<div class="t" style="left:434px;top:284.4px">On</div>
<div class="t" style="left:484px;top:284.4px"><i>1.0000</i></div>
<div class="t" style="left:544px;top:284.4px"><i>25333</i></div>
<div class="t" style="left:644px;top:284.4px"><i>0.004</i> m</div>
<div class="t" style="left:724px;top:284.4px">aligned [<i>0.011</i> m]</div>
<div class="t" style="left:854px;top:284.4px">n/a</div>
<div class="t" style="left:934px;top:284.4px">aligned [<i>0.011</i> m]</div>
<div class="t" style="left:1064px;top:284.4px">Ungrouped</div>
<svg class="a" style="left:8px;top:305px" width="16" height="9" viewBox="0 0 16 9"><path d="M0 1.2h5l3 3.3l3-3.3h5M0 7.8h5l3-3.3l3 3.3h5" stroke="#b4c400" stroke-width="2.4" fill="none"/><path d="M0 4.5h3M3.5 2.3l3 2.2l-3 2.2M6.5 2.3l3 2.2l-3 2.2M13.5 2.8l-2.5 1.7l2.5 1.7" stroke="#a8b800" stroke-width="1.7" fill="none"/><path d="M3 2.5l3 2l-3 2M11 1.5l-2 3l2 3" stroke="#5a6000" stroke-width="0.6" fill="none"/></svg>
<div class="t" style="left:31px;top:302.4px">Cloud/M<i>...</i></div>
<div class="t" style="left:104px;top:302.4px">ST <i>61</i>: SW-<i>...</i></div>
<div class="t" style="left:194px;top:302.4px">ST <i>62</i>: SW-<i>...</i></div>
<div class="t" style="left:284px;top:302.4px">Cloud: Cloud/Mesh - <i>...</i></div>
<div class="t" style="left:434px;top:302.4px">On</div>
<div class="t" style="left:484px;top:302.4px"><i>1.0000</i></div>
<div class="t" style="left:544px;top:302.4px"><i>178533</i></div>
<div class="t" style="left:644px;top:302.4px"><i>0.004</i> m</div>
<div class="t" style="left:724px;top:302.4px">aligned [<i>0.007</i> m]</div>
<div class="t" style="left:854px;top:302.4px">n/a</div>
<div class="t" style="left:934px;top:302.4px">aligned [<i>0.007</i> m]</div>
<div class="t" style="left:1064px;top:302.4px">Ungrouped</div>
<svg class="a" style="left:8px;top:323px" width="16" height="9" viewBox="0 0 16 9"><path d="M0 1.2h5l3 3.3l3-3.3h5M0 7.8h5l3-3.3l3 3.3h5" stroke="#b4c400" stroke-width="2.4" fill="none"/><path d="M0 4.5h3M3.5 2.3l3 2.2l-3 2.2M6.5 2.3l3 2.2l-3 2.2M13.5 2.8l-2.5 1.7l2.5 1.7" stroke="#a8b800" stroke-width="1.7" fill="none"/><path d="M3 2.5l3 2l-3 2M11 1.5l-2 3l2 3" stroke="#5a6000" stroke-width="0.6" fill="none"/></svg>
<div class="t" style="left:31px;top:320.4px">T<i>22</i></div>
<div class="t" style="left:104px;top:320.4px">ST <i>280</i>: SW<i>...</i></div>
<div class="t" style="left:194px;top:320.4px">ST <i>287</i>: SW<i>...</i></div>
<div class="t" style="left:284px;top:320.4px">Coincident: Vertex - V<i>...</i></div>
<div class="t" style="left:434px;top:320.4px">On</div>
<div class="t" style="left:484px;top:320.4px"><i>1.0000</i></div>
<div class="t" style="left:544px;top:320.4px">n/a</div>
<div class="t" style="left:644px;top:320.4px"><i>0.004</i> m</div>
<div class="t" style="left:724px;top:320.4px">(-<i>0.002,</i> -<i>0.003,</i> <i>0.00...</i></div>
<div class="t" style="left:854px;top:320.4px">n/a</div>
<div class="t" style="left:934px;top:320.4px">n/a</div>
<div class="t" style="left:1064px;top:320.4px">Ungrouped</div>
<svg class="a" style="left:8px;top:341px" width="16" height="9" viewBox="0 0 16 9"><path d="M0 1.2h5l3 3.3l3-3.3h5M0 7.8h5l3-3.3l3 3.3h5" stroke="#b4c400" stroke-width="2.4" fill="none"/><path d="M0 4.5h3M3.5 2.3l3 2.2l-3 2.2M6.5 2.3l3 2.2l-3 2.2M13.5 2.8l-2.5 1.7l2.5 1.7" stroke="#a8b800" stroke-width="1.7" fill="none"/><path d="M3 2.5l3 2l-3 2M11 1.5l-2 3l2 3" stroke="#5a6000" stroke-width="0.6" fill="none"/></svg>
<div class="t" style="left:31px;top:338.4px">Cloud/M<i>...</i></div>
<div class="t" style="left:104px;top:338.4px">ST <i>120</i>: SW<i>...</i></div>
<div class="t" style="left:194px;top:338.4px">ST <i>218</i>: SW<i>...</i></div>
<div class="t" style="left:284px;top:338.4px">Cloud: Cloud/Mesh - <i>...</i></div>
<div class="t" style="left:434px;top:338.4px">On</div>
<div class="t" style="left:484px;top:338.4px"><i>1.0000</i></div>
<div class="t" style="left:544px;top:338.4px"><i>18433</i></div>
<div class="t" style="left:644px;top:338.4px"><i>0.004</i> m</div>
<div class="t" style="left:724px;top:338.4px">aligned [<i>0.028</i> m]</div>
<div class="t" style="left:854px;top:338.4px">n/a</div>
<div class="t" style="left:934px;top:338.4px">aligned [<i>0.028</i> m]</div>
<div class="t" style="left:1064px;top:338.4px">Ungrouped</div>
<svg class="a" style="left:8px;top:359px" width="16" height="9" viewBox="0 0 16 9"><path d="M0 1.2h5l3 3.3l3-3.3h5M0 7.8h5l3-3.3l3 3.3h5" stroke="#b4c400" stroke-width="2.4" fill="none"/><path d="M0 4.5h3M3.5 2.3l3 2.2l-3 2.2M6.5 2.3l3 2.2l-3 2.2M13.5 2.8l-2.5 1.7l2.5 1.7" stroke="#a8b800" stroke-width="1.7" fill="none"/><path d="M3 2.5l3 2l-3 2M11 1.5l-2 3l2 3" stroke="#5a6000" stroke-width="0.6" fill="none"/></svg>
<div class="t" style="left:31px;top:356.4px">Cloud/M<i>...</i></div>
<div class="t" style="left:104px;top:356.4px">Station-<i>033</i>:<i>...</i></div>
<div class="t" style="left:194px;top:356.4px">Station-<i>032</i>:<i>...</i></div>
<div class="t" style="left:284px;top:356.4px">Cloud: Cloud/Mesh - <i>...</i></div>
<div class="t" style="left:434px;top:356.4px">On</div>
<div class="t" style="left:484px;top:356.4px"><i>1.0000</i></div>
<div class="t" style="left:544px;top:356.4px"><i>119533</i></div>
<div class="t" style="left:644px;top:356.4px"><i>0.004</i> m</div>
<div class="t" style="left:724px;top:356.4px">aligned [<i>0.006</i> m]</div>
<div class="t" style="left:854px;top:356.4px">n/a</div>
<div class="t" style="left:934px;top:356.4px">aligned [<i>0.006</i> m]</div>
<div class="t" style="left:1064px;top:356.4px">Ungrouped</div>
<svg class="a" style="left:8px;top:377px" width="16" height="9" viewBox="0 0 16 9"><path d="M0 1.2h5l3 3.3l3-3.3h5M0 7.8h5l3-3.3l3 3.3h5" stroke="#b4c400" stroke-width="2.4" fill="none"/><path d="M0 4.5h3M3.5 2.3l3 2.2l-3 2.2M6.5 2.3l3 2.2l-3 2.2M13.5 2.8l-2.5 1.7l2.5 1.7" stroke="#a8b800" stroke-width="1.7" fill="none"/><path d="M3 2.5l3 2l-3 2M11 1.5l-2 3l2 3" stroke="#5a6000" stroke-width="0.6" fill="none"/></svg>
<div class="t" style="left:31px;top:374.4px">T<i>24</i></div>
<div class="t" style="left:104px;top:374.4px">ST <i>288</i>: SW<i>...</i></div>
<div class="t" style="left:194px;top:374.4px">ST <i>294</i>: SW<i>...</i></div>
<div class="t" style="left:284px;top:374.4px">Coincident: Vertex - V<i>...</i></div>
<div class="t" style="left:434px;top:374.4px">On</div>
<div class="t" style="left:484px;top:374.4px"><i>1.0000</i></div>
<div class="t" style="left:544px;top:374.4px">n/a</div>
<div class="t" style="left:644px;top:374.4px"><i>0.004</i> m</div>
<div class="t" style="left:724px;top:374.4px">(-<i>0.001,</i> <i>0.000,</i> <i>0.00...</i></div>
<div class="t" style="left:854px;top:374.4px">n/a</div>
<div class="t" style="left:934px;top:374.4px">n/a</div>
<div class="t" style="left:1064px;top:374.4px">Group <i>10</i>/<i>...</i></div>
<svg class="a" style="left:8px;top:395px" width="16" height="9" viewBox="0 0 16 9"><path d="M0 1.2h5l3 3.3l3-3.3h5M0 7.8h5l3-3.3l3 3.3h5" stroke="#b4c400" stroke-width="2.4" fill="none"/><path d="M0 4.5h3M3.5 2.3l3 2.2l-3 2.2M6.5 2.3l3 2.2l-3 2.2M13.5 2.8l-2.5 1.7l2.5 1.7" stroke="#a8b800" stroke-width="1.7" fill="none"/><path d="M3 2.5l3 2l-3 2M11 1.5l-2 3l2 3" stroke="#5a6000" stroke-width="0.6" fill="none"/></svg>
<div class="t" style="left:31px;top:392.4px">T<i>28</i></div>
<div class="t" style="left:104px;top:392.4px">Known Coo<i>...</i></div>
<div class="t" style="left:194px;top:392.4px">ST <i>301</i>: SW<i>...</i></div>
<div class="t" style="left:284px;top:392.4px">Coincident: Vertex - V<i>...</i></div>
<div class="t" style="left:434px;top:392.4px">On</div>
<div class="t" style="left:484px;top:392.4px"><i>1.0000</i></div>
<div class="t" style="left:544px;top:392.4px">n/a</div>
<div class="t" style="left:644px;top:392.4px"><i>0.004</i> m</div>
<div class="t" style="left:724px;top:392.4px">(<i>0.000,</i> <i>0.000,</i> -<i>0.00...</i></div>
<div class="t" style="left:854px;top:392.4px">n/a</div>
<div class="t" style="left:934px;top:392.4px">n/a</div>
<div class="t" style="left:1064px;top:392.4px">Ungrouped</div>
<svg class="a" style="left:8px;top:413px" width="16" height="9" viewBox="0 0 16 9"><path d="M0 1.2h5l3 3.3l3-3.3h5M0 7.8h5l3-3.3l3 3.3h5" stroke="#b4c400" stroke-width="2.4" fill="none"/><path d="M0 4.5h3M3.5 2.3l3 2.2l-3 2.2M6.5 2.3l3 2.2l-3 2.2M13.5 2.8l-2.5 1.7l2.5 1.7" stroke="#a8b800" stroke-width="1.7" fill="none"/><path d="M3 2.5l3 2l-3 2M11 1.5l-2 3l2 3" stroke="#5a6000" stroke-width="0.6" fill="none"/></svg>
<div class="t" style="left:31px;top:410.4px">T<i>27</i></div>
<div class="t" style="left:104px;top:410.4px">ST <i>295</i>: SW<i>...</i></div>
<div class="t" style="left:194px;top:410.4px">ST <i>300</i>: SW<i>...</i></div>
<div class="t" style="left:284px;top:410.4px">Coincident: Vertex - V<i>...</i></div>
<div class="t" style="left:434px;top:410.4px">On</div>
<div class="t" style="left:484px;top:410.4px"><i>1.0000</i></div>
<div class="t" style="left:544px;top:410.4px">n/a</div>
<div class="t" style="left:644px;top:410.4px"><i>0.004</i> m</div>
<div class="t" style="left:724px;top:410.4px">(<i>0.000,</i> <i>0.000,</i> -<i>0.00...</i></div>
<div class="t" style="left:854px;top:410.4px">n/a</div>
<div class="t" style="left:934px;top:410.4px">n/a</div>
<div class="t" style="left:1064px;top:410.4px">Ungrouped</div>
<svg class="a" style="left:8px;top:431px" width="16" height="9" viewBox="0 0 16 9"><path d="M0 1.2h5l3 3.3l3-3.3h5M0 7.8h5l3-3.3l3 3.3h5" stroke="#b4c400" stroke-width="2.4" fill="none"/><path d="M0 4.5h3M3.5 2.3l3 2.2l-3 2.2M6.5 2.3l3 2.2l-3 2.2M13.5 2.8l-2.5 1.7l2.5 1.7" stroke="#a8b800" stroke-width="1.7" fill="none"/><path d="M3 2.5l3 2l-3 2M11 1.5l-2 3l2 3" stroke="#5a6000" stroke-width="0.6" fill="none"/></svg>
<div class="t" style="left:31px;top:428.4px">T<i>22</i></div>
<div class="t" style="left:104px;top:428.4px">ST <i>280</i>: SW<i>...</i></div>
<div class="t" style="left:194px;top:428.4px">ST <i>286</i>: SW<i>...</i></div>
<div class="t" style="left:284px;top:428.4px">Coincident: Vertex - V<i>...</i></div>
<div class="t" style="left:434px;top:428.4px">On</div>
<div class="t" style="left:484px;top:428.4px"><i>1.0000</i></div>
<div class="t" style="left:544px;top:428.4px">n/a</div>
<div class="t" style="left:644px;top:428.4px"><i>0.004</i> m</div>
<div class="t" style="left:724px;top:428.4px">(-<i>0.002,</i> -<i>0.003,</i> <i>0.00...</i></div>
<div class="t" style="left:854px;top:428.4px">n/a</div>
<div class="t" style="left:934px;top:428.4px">n/a</div>
<div class="t" style="left:1064px;top:428.4px">Ungrouped</div>
<svg class="a" style="left:8px;top:449px" width="16" height="9" viewBox="0 0 16 9"><path d="M0 1.2h5l3 3.3l3-3.3h5M0 7.8h5l3-3.3l3 3.3h5" stroke="#b4c400" stroke-width="2.4" fill="none"/><path d="M0 4.5h3M3.5 2.3l3 2.2l-3 2.2M6.5 2.3l3 2.2l-3 2.2M13.5 2.8l-2.5 1.7l2.5 1.7" stroke="#a8b800" stroke-width="1.7" fill="none"/><path d="M3 2.5l3 2l-3 2M11 1.5l-2 3l2 3" stroke="#5a6000" stroke-width="0.6" fill="none"/></svg>
<div class="t" style="left:31px;top:446.4px">T<i>01</i></div>
<div class="t" style="left:104px;top:446.4px">ST<i>042</i>: SW<i>...</i></div>
<div class="t" style="left:194px;top:446.4px">ST<i>051</i>: SW<i>...</i></div>
<div class="t" style="left:284px;top:446.4px">Coincident: Vertex - V<i>...</i></div>
<div class="t" style="left:434px;top:446.4px">On</div>
<div class="t" style="left:484px;top:446.4px"><i>1.0000</i></div>
<div class="t" style="left:544px;top:446.4px">n/a</div>
<div class="t" style="left:644px;top:446.4px"><i>0.004</i> m</div>
<div class="t" style="left:724px;top:446.4px">(<i>0.000,</i> <i>0.001,</i> -<i>0.00...</i></div>
<div class="t" style="left:854px;top:446.4px"><i>0.001</i> m</div>
<div class="t" style="left:934px;top:446.4px">(<i>0.000,</i> -<i>0.001,</i> <i>0.00...</i></div>
<div class="t" style="left:1064px;top:446.4px">Group <i>1</i></div>
<svg class="a" style="left:8px;top:467px" width="16" height="9" viewBox="0 0 16 9"><path d="M0 1.2h5l3 3.3l3-3.3h5M0 7.8h5l3-3.3l3 3.3h5" stroke="#b4c400" stroke-width="2.4" fill="none"/><path d="M0 4.5h3M3.5 2.3l3 2.2l-3 2.2M6.5 2.3l3 2.2l-3 2.2M13.5 2.8l-2.5 1.7l2.5 1.7" stroke="#a8b800" stroke-width="1.7" fill="none"/><path d="M3 2.5l3 2l-3 2M11 1.5l-2 3l2 3" stroke="#5a6000" stroke-width="0.6" fill="none"/></svg>
<div class="t" style="left:31px;top:464.4px">T<i>01</i></div>
<div class="t" style="left:104px;top:464.4px">ST<i>041</i>: SW<i>...</i></div>
<div class="t" style="left:194px;top:464.4px">ST<i>051</i>: SW<i>...</i></div>
<div class="t" style="left:284px;top:464.4px">Coincident: Vertex - V<i>...</i></div>
<div class="t" style="left:434px;top:464.4px">On</div>
<div class="t" style="left:484px;top:464.4px"><i>1.0000</i></div>
<div class="t" style="left:544px;top:464.4px">n/a</div>
<div class="t" style="left:644px;top:464.4px"><i>0.004</i> m</div>
<div class="t" style="left:724px;top:464.4px">(<i>0.000,</i> <i>0.000,</i> -<i>0.00...</i></div>
<div class="t" style="left:854px;top:464.4px"><i>0.001</i> m</div>
<div class="t" style="left:934px;top:464.4px">(<i>0.000,</i> -<i>0.001,</i> <i>0.00...</i></div>
<div class="t" style="left:1064px;top:464.4px">Group <i>1</i></div>
<svg class="a" style="left:8px;top:485px" width="16" height="9" viewBox="0 0 16 9"><path d="M0 1.2h5l3 3.3l3-3.3h5M0 7.8h5l3-3.3l3 3.3h5" stroke="#b4c400" stroke-width="2.4" fill="none"/><path d="M0 4.5h3M3.5 2.3l3 2.2l-3 2.2M6.5 2.3l3 2.2l-3 2.2M13.5 2.8l-2.5 1.7l2.5 1.7" stroke="#a8b800" stroke-width="1.7" fill="none"/><path d="M3 2.5l3 2l-3 2M11 1.5l-2 3l2 3" stroke="#5a6000" stroke-width="0.6" fill="none"/></svg>
<div class="t" style="left:31px;top:482.4px">T<i>02</i></div>
<div class="t" style="left:104px;top:482.4px">ST<i>042</i>: SW<i>...</i></div>
<div class="t" style="left:194px;top:482.4px">ST<i>051</i>: SW<i>...</i></div>
<div class="t" style="left:284px;top:482.4px">Coincident: Vertex - V<i>...</i></div>
<div class="t" style="left:434px;top:482.4px">On</div>
<div class="t" style="left:484px;top:482.4px"><i>1.0000</i></div>
<div class="t" style="left:544px;top:482.4px">n/a</div>
<div class="t" style="left:644px;top:482.4px"><i>0.005</i> m</div>
<div class="t" style="left:724px;top:482.4px">(<i>0.000,</i> <i>0.000,</i> <i>0.004...</i></div>
<div class="t" style="left:854px;top:482.4px"><i>0.001</i> m</div>
<div class="t" style="left:934px;top:482.4px">(<i>0.000,</i> <i>0.001,</i> <i>0.000...</i></div>
<div class="t" style="left:1064px;top:482.4px">Group <i>1</i></div>
<svg class="a" style="left:8px;top:503px" width="16" height="9" viewBox="0 0 16 9"><path d="M0 1.2h5l3 3.3l3-3.3h5M0 7.8h5l3-3.3l3 3.3h5" stroke="#b4c400" stroke-width="2.4" fill="none"/><path d="M0 4.5h3M3.5 2.3l3 2.2l-3 2.2M6.5 2.3l3 2.2l-3 2.2M13.5 2.8l-2.5 1.7l2.5 1.7" stroke="#a8b800" stroke-width="1.7" fill="none"/><path d="M3 2.5l3 2l-3 2M11 1.5l-2 3l2 3" stroke="#5a6000" stroke-width="0.6" fill="none"/></svg>
<div class="t" style="left:31px;top:500.4px">T<i>02</i></div>
<div class="t" style="left:104px;top:500.4px">ST<i>041</i>: SW<i>...</i></div>
<div class="t" style="left:194px;top:500.4px">ST<i>051</i>: SW<i>...</i></div>
<div class="t" style="left:284px;top:500.4px">Coincident: Vertex - V<i>...</i></div>
<div class="t" style="left:434px;top:500.4px">On</div>
<div class="t" style="left:484px;top:500.4px"><i>1.0000</i></div>
<div class="t" style="left:544px;top:500.4px">n/a</div>
<div class="t" style="left:644px;top:500.4px"><i>0.005</i> m</div>
<div class="t" style="left:724px;top:500.4px">(<i>0.000,</i> <i>0.000,</i> <i>0.005...</i></div>
<div class="t" style="left:854px;top:500.4px"><i>0.001</i> m</div>
<div class="t" style="left:934px;top:500.4px">(<i>0.000,</i> <i>0.001,</i> <i>0.000...</i></div>
<div class="t" style="left:1064px;top:500.4px">Group <i>1</i></div>
<svg class="a" style="left:8px;top:521px" width="16" height="9" viewBox="0 0 16 9"><path d="M0 1.2h5l3 3.3l3-3.3h5M0 7.8h5l3-3.3l3 3.3h5" stroke="#b4c400" stroke-width="2.4" fill="none"/><path d="M0 4.5h3M3.5 2.3l3 2.2l-3 2.2M6.5 2.3l3 2.2l-3 2.2M13.5 2.8l-2.5 1.7l2.5 1.7" stroke="#a8b800" stroke-width="1.7" fill="none"/><path d="M3 2.5l3 2l-3 2M11 1.5l-2 3l2 3" stroke="#5a6000" stroke-width="0.6" fill="none"/></svg>
<div class="t" style="left:31px;top:518.4px">Cloud/M<i>...</i></div>
<div class="t" style="left:104px;top:518.4px">ST <i>266</i>: SW<i>...</i></div>
<div class="t" style="left:194px;top:518.4px">ST <i>267</i>: SW<i>...</i></div>
<div class="t" style="left:284px;top:518.4px">Cloud: Cloud/Mesh - <i>...</i></div>
<div class="t" style="left:434px;top:518.4px">On</div>
<div class="t" style="left:484px;top:518.4px"><i>1.0000</i></div>
<div class="t" style="left:544px;top:518.4px"><i>21333</i></div>
<div class="t" style="left:644px;top:518.4px"><i>0.005</i> m</div>
<div class="t" style="left:724px;top:518.4px">aligned [<i>0.014</i> m]</div>
<div class="t" style="left:854px;top:518.4px">n/a</div>
<div class="t" style="left:934px;top:518.4px">aligned [<i>0.014</i> m]</div>
<div class="t" style="left:1064px;top:518.4px">Ungrouped</div>
<svg class="a" style="left:8px;top:539px" width="16" height="9" viewBox="0 0 16 9"><path d="M0 1.2h5l3 3.3l3-3.3h5M0 7.8h5l3-3.3l3 3.3h5" stroke="#b4c400" stroke-width="2.4" fill="none"/><path d="M0 4.5h3M3.5 2.3l3 2.2l-3 2.2M6.5 2.3l3 2.2l-3 2.2M13.5 2.8l-2.5 1.7l2.5 1.7" stroke="#a8b800" stroke-width="1.7" fill="none"/><path d="M3 2.5l3 2l-3 2M11 1.5l-2 3l2 3" stroke="#5a6000" stroke-width="0.6" fill="none"/></svg>
<div class="t" style="left:31px;top:536.4px">T<i>01</i></div>
<div class="t" style="left:104px;top:536.4px">ST<i>044</i>: SW<i>...</i></div>
<div class="t" style="left:194px;top:536.4px">ST<i>051</i>: SW<i>...</i></div>
<div class="t" style="left:284px;top:536.4px">Coincident: Vertex - V<i>...</i></div>
<div class="t" style="left:434px;top:536.4px">On</div>
<div class="t" style="left:484px;top:536.4px"><i>1.0000</i></div>
<div class="t" style="left:544px;top:536.4px">n/a</div>
<div class="t" style="left:644px;top:536.4px"><i>0.005</i> m</div>
<div class="t" style="left:724px;top:536.4px">(<i>0.000,</i> <i>0.000,</i> -<i>0.00...</i></div>
<div class="t" style="left:854px;top:536.4px"><i>0.001</i> m</div>
<div class="t" style="left:934px;top:536.4px">(<i>0.000,</i> -<i>0.001,</i> <i>0.00...</i></div>
<div class="t" style="left:1064px;top:536.4px">Group <i>1</i></div>
<svg class="a" style="left:8px;top:557px" width="16" height="9" viewBox="0 0 16 9"><path d="M0 1.2h5l3 3.3l3-3.3h5M0 7.8h5l3-3.3l3 3.3h5" stroke="#b4c400" stroke-width="2.4" fill="none"/><path d="M0 4.5h3M3.5 2.3l3 2.2l-3 2.2M6.5 2.3l3 2.2l-3 2.2M13.5 2.8l-2.5 1.7l2.5 1.7" stroke="#a8b800" stroke-width="1.7" fill="none"/><path d="M3 2.5l3 2l-3 2M11 1.5l-2 3l2 3" stroke="#5a6000" stroke-width="0.6" fill="none"/></svg>
<div class="t" style="left:31px;top:554.4px">Cloud/M<i>...</i></div>
<div class="t" style="left:104px;top:554.4px">Station-<i>007</i>:<i>...</i></div>
<div class="t" style="left:194px;top:554.4px">Station-<i>008</i>:<i>...</i></div>
<div class="t" style="left:284px;top:554.4px">Cloud: Cloud/Mesh - <i>...</i></div>
<div class="t" style="left:434px;top:554.4px">On</div>
<div class="t" style="left:484px;top:554.4px"><i>1.0000</i></div>
<div class="t" style="left:544px;top:554.4px"><i>529700</i></div>
<div class="t" style="left:644px;top:554.4px"><i>0.005</i> m</div>
<div class="t" style="left:724px;top:554.4px">aligned [<i>0.012</i> m]</div>
<div class="t" style="left:854px;top:554.4px">n/a</div>
<div class="t" style="left:934px;top:554.4px">aligned [<i>0.012</i> m]</div>
<div class="t" style="left:1064px;top:554.4px">Ungrouped</div>
<svg class="a" style="left:8px;top:575px" width="16" height="9" viewBox="0 0 16 9"><path d="M0 1.2h5l3 3.3l3-3.3h5M0 7.8h5l3-3.3l3 3.3h5" stroke="#b4c400" stroke-width="2.4" fill="none"/><path d="M0 4.5h3M3.5 2.3l3 2.2l-3 2.2M6.5 2.3l3 2.2l-3 2.2M13.5 2.8l-2.5 1.7l2.5 1.7" stroke="#a8b800" stroke-width="1.7" fill="none"/><path d="M3 2.5l3 2l-3 2M11 1.5l-2 3l2 3" stroke="#5a6000" stroke-width="0.6" fill="none"/></svg>
<div class="t" style="left:31px;top:572.4px">T<i>02</i></div>
<div class="t" style="left:104px;top:572.4px">ST<i>044</i>: SW<i>...</i></div>
<div class="t" style="left:194px;top:572.4px">ST<i>051</i>: SW<i>...</i></div>
<div class="t" style="left:284px;top:572.4px">Coincident: Vertex - V<i>...</i></div>
<div class="t" style="left:434px;top:572.4px">On</div>
<div class="t" style="left:484px;top:572.4px"><i>1.0000</i></div>
<div class="t" style="left:544px;top:572.4px">n/a</div>
<div class="t" style="left:644px;top:572.4px"><i>0.005</i> m</div>
<div class="t" style="left:724px;top:572.4px">(<i>0.000,</i> <i>0.000,</i> <i>0.005...</i></div>
<div class="t" style="left:854px;top:572.4px"><i>0.001</i> m</div>
<div class="t" style="left:934px;top:572.4px">(<i>0.000,</i> <i>0.001,</i> <i>0.000...</i></div>
<div class="t" style="left:1064px;top:572.4px">Group <i>1</i></div>
<svg class="a" style="left:8px;top:593px" width="16" height="9" viewBox="0 0 16 9"><path d="M0 1.2h5l3 3.3l3-3.3h5M0 7.8h5l3-3.3l3 3.3h5" stroke="#b4c400" stroke-width="2.4" fill="none"/><path d="M0 4.5h3M3.5 2.3l3 2.2l-3 2.2M6.5 2.3l3 2.2l-3 2.2M13.5 2.8l-2.5 1.7l2.5 1.7" stroke="#a8b800" stroke-width="1.7" fill="none"/><path d="M3 2.5l3 2l-3 2M11 1.5l-2 3l2 3" stroke="#5a6000" stroke-width="0.6" fill="none"/></svg>
<div class="t" style="left:31px;top:590.4px">T<i>01</i></div>
<div class="t" style="left:104px;top:590.4px">ST<i>045</i>: SW<i>...</i></div>
<div class="t" style="left:194px;top:590.4px">ST<i>051</i>: SW<i>...</i></div>
<div class="t" style="left:284px;top:590.4px">Coincident: Vertex - V<i>...</i></div>
<div class="t" style="left:434px;top:590.4px">On</div>
<div class="t" style="left:484px;top:590.4px"><i>1.0000</i></div>
<div class="t" style="left:544px;top:590.4px">n/a</div>
<div class="t" style="left:644px;top:590.4px"><i>0.005</i> m</div>
<div class="t" style="left:724px;top:590.4px">(<i>0.000,</i> <i>0.000,</i> -<i>0.00...</i></div>
<div class="t" style="left:854px;top:590.4px"><i>0.001</i> m</div>
<div class="t" style="left:934px;top:590.4px">(<i>0.000,</i> -<i>0.001,</i> <i>0.00...</i></div>
<div class="t" style="left:1064px;top:590.4px">Group <i>1</i></div>
<svg class="a" style="left:8px;top:612px" width="16" height="9" viewBox="0 0 16 9"><path d="M0 1.2h5l3 3.3l3-3.3h5M0 7.8h5l3-3.3l3 3.3h5" stroke="#b4c400" stroke-width="2.4" fill="none"/><path d="M0 4.5h3M3.5 2.3l3 2.2l-3 2.2M6.5 2.3l3 2.2l-3 2.2M13.5 2.8l-2.5 1.7l2.5 1.7" stroke="#a8b800" stroke-width="1.7" fill="none"/><path d="M3 2.5l3 2l-3 2M11 1.5l-2 3l2 3" stroke="#5a6000" stroke-width="0.6" fill="none"/></svg>
<div class="t" style="left:31px;top:609.4px">T<i>22</i></div>
<div class="t" style="left:104px;top:609.4px">Known Coo<i>...</i></div>
<div class="t" style="left:194px;top:609.4px">ST <i>281</i>: SW<i>...</i></div>
<div class="t" style="left:284px;top:609.4px">Coincident: Vertex - V<i>...</i></div>
<div class="t" style="left:434px;top:609.4px">On</div>
<div class="t" style="left:484px;top:609.4px"><i>1.0000</i></div>
<div class="t" style="left:544px;top:609.4px">n/a</div>
<div class="t" style="left:644px;top:609.4px"><i>0.005</i> m</div>
<div class="t" style="left:724px;top:609.4px">(-<i>0.002,</i> -<i>0.003,</i> <i>0.00...</i></div>
<div class="t" style="left:854px;top:609.4px">n/a</div>
<div class="t" style="left:934px;top:609.4px">n/a</div>
<div class="t" style="left:1064px;top:609.4px">Ungrouped</div>
<svg class="a" style="left:8px;top:630px" width="16" height="9" viewBox="0 0 16 9"><path d="M0 1.2h5l3 3.3l3-3.3h5M0 7.8h5l3-3.3l3 3.3h5" stroke="#b4c400" stroke-width="2.4" fill="none"/><path d="M0 4.5h3M3.5 2.3l3 2.2l-3 2.2M6.5 2.3l3 2.2l-3 2.2M13.5 2.8l-2.5 1.7l2.5 1.7" stroke="#a8b800" stroke-width="1.7" fill="none"/><path d="M3 2.5l3 2l-3 2M11 1.5l-2 3l2 3" stroke="#5a6000" stroke-width="0.6" fill="none"/></svg>
<div class="t" style="left:31px;top:627.4px">T<i>02</i></div>
<div class="t" style="left:104px;top:627.4px">ST<i>045</i>: SW<i>...</i></div>
<div class="t" style="left:194px;top:627.4px">ST<i>051</i>: SW<i>...</i></div>
<div class="t" style="left:284px;top:627.4px">Coincident: Vertex - V<i>...</i></div>
<div class="t" style="left:434px;top:627.4px">On</div>
<div class="t" style="left:484px;top:627.4px"><i>1.0000</i></div>
<div class="t" style="left:544px;top:627.4px">n/a</div>
<div class="t" style="left:644px;top:627.4px"><i>0.005</i> m</div>
<div class="t" style="left:724px;top:627.4px">(<i>0.000,</i> <i>0.000,</i> <i>0.005...</i></div>
<div class="t" style="left:854px;top:627.4px"><i>0.001</i> m</div>
<div class="t" style="left:934px;top:627.4px">(<i>0.000,</i> <i>0.001,</i> <i>0.000...</i></div>
<div class="t" style="left:1064px;top:627.4px">Group <i>1</i></div>
<svg class="a" style="left:8px;top:648px" width="16" height="9" viewBox="0 0 16 9"><path d="M0 1.2h5l3 3.3l3-3.3h5M0 7.8h5l3-3.3l3 3.3h5" stroke="#b4c400" stroke-width="2.4" fill="none"/><path d="M0 4.5h3M3.5 2.3l3 2.2l-3 2.2M6.5 2.3l3 2.2l-3 2.2M13.5 2.8l-2.5 1.7l2.5 1.7" stroke="#a8b800" stroke-width="1.7" fill="none"/><path d="M3 2.5l3 2l-3 2M11 1.5l-2 3l2 3" stroke="#5a6000" stroke-width="0.6" fill="none"/></svg>
<div class="t" style="left:31px;top:645.4px">T<i>22</i></div>
<div class="t" style="left:104px;top:645.4px">Known Coo<i>...</i></div>
<div class="t" style="left:194px;top:645.4px">ST <i>282</i>: SW<i>...</i></div>
<div class="t" style="left:284px;top:645.4px">Coincident: Vertex - V<i>...</i></div>
<div class="t" style="left:434px;top:645.4px">On</div>
<div class="t" style="left:484px;top:645.4px"><i>1.0000</i></div>
<div class="t" style="left:544px;top:645.4px">n/a</div>
<div class="t" style="left:644px;top:645.4px"><i>0.005</i> m</div>
<div class="t" style="left:724px;top:645.4px">(-<i>0.002,</i> -<i>0.003,</i> <i>0.00...</i></div>
<div class="t" style="left:854px;top:645.4px">n/a</div>
<div class="t" style="left:934px;top:645.4px">n/a</div>
<div class="t" style="left:1064px;top:645.4px">Ungrouped</div>
<svg class="a" style="left:8px;top:666px" width="16" height="9" viewBox="0 0 16 9"><path d="M0 1.2h5l3 3.3l3-3.3h5M0 7.8h5l3-3.3l3 3.3h5" stroke="#b4c400" stroke-width="2.4" fill="none"/><path d="M0 4.5h3M3.5 2.3l3 2.2l-3 2.2M6.5 2.3l3 2.2l-3 2.2M13.5 2.8l-2.5 1.7l2.5 1.7" stroke="#a8b800" stroke-width="1.7" fill="none"/><path d="M3 2.5l3 2l-3 2M11 1.5l-2 3l2 3" stroke="#5a6000" stroke-width="0.6" fill="none"/></svg>
<div class="t" style="left:31px;top:663.4px">Cloud/M<i>...</i></div>
<div class="t" style="left:104px;top:663.4px">Station-<i>033</i>:<i>...</i></div>
<div class="t" style="left:194px;top:663.4px">Station-<i>034</i>:<i>...</i></div>
<div class="t" style="left:284px;top:663.4px">Cloud: Cloud/Mesh - <i>...</i></div>
<div class="t" style="left:434px;top:663.4px">On</div>
<div class="t" style="left:484px;top:663.4px"><i>1.0000</i></div>
<div class="t" style="left:544px;top:663.4px"><i>188466</i></div>
<div class="t" style="left:644px;top:663.4px"><i>0.005</i> m</div>
<div class="t" style="left:724px;top:663.4px">aligned [<i>0.005</i> m]</div>
<div class="t" style="left:854px;top:663.4px">n/a</div>
<div class="t" style="left:934px;top:663.4px">aligned [<i>0.005</i> m]</div>
<div class="t" style="left:1064px;top:663.4px">Ungrouped</div>
<svg class="a" style="left:8px;top:684px" width="16" height="9" viewBox="0 0 16 9"><path d="M0 1.2h5l3 3.3l3-3.3h5M0 7.8h5l3-3.3l3 3.3h5" stroke="#b4c400" stroke-width="2.4" fill="none"/><path d="M0 4.5h3M3.5 2.3l3 2.2l-3 2.2M6.5 2.3l3 2.2l-3 2.2M13.5 2.8l-2.5 1.7l2.5 1.7" stroke="#a8b800" stroke-width="1.7" fill="none"/><path d="M3 2.5l3 2l-3 2M11 1.5l-2 3l2 3" stroke="#5a6000" stroke-width="0.6" fill="none"/></svg>
<div class="t" style="left:31px;top:681.4px">T<i>27</i></div>
<div class="t" style="left:104px;top:681.4px">Known Coo<i>...</i></div>
<div class="t" style="left:194px;top:681.4px">ST <i>301</i>: SW<i>...</i></div>
<div class="t" style="left:284px;top:681.4px">Coincident: Vertex - V<i>...</i></div>
<div class="t" style="left:434px;top:681.4px">On</div>
<div class="t" style="left:484px;top:681.4px"><i>1.0000</i></div>
<div class="t" style="left:544px;top:681.4px">n/a</div>
<div class="t" style="left:644px;top:681.4px"><i>0.005</i> m</div>
<div class="t" style="left:724px;top:681.4px">(<i>0.001,</i> -<i>0.001,</i> -<i>0.00...</i></div>
<div class="t" style="left:854px;top:681.4px">n/a</div>
<div class="t" style="left:934px;top:681.4px">n/a</div>
<div class="t" style="left:1064px;top:681.4px">Ungrouped</div>
<svg class="a" style="left:8px;top:702px" width="16" height="9" viewBox="0 0 16 9"><path d="M0 1.2h5l3 3.3l3-3.3h5M0 7.8h5l3-3.3l3 3.3h5" stroke="#b4c400" stroke-width="2.4" fill="none"/><path d="M0 4.5h3M3.5 2.3l3 2.2l-3 2.2M6.5 2.3l3 2.2l-3 2.2M13.5 2.8l-2.5 1.7l2.5 1.7" stroke="#a8b800" stroke-width="1.7" fill="none"/><path d="M3 2.5l3 2l-3 2M11 1.5l-2 3l2 3" stroke="#5a6000" stroke-width="0.6" fill="none"/></svg>
<div class="t" style="left:31px;top:699.4px">Cloud/M<i>...</i></div>
<div class="t" style="left:104px;top:699.4px">Station-<i>009</i>:<i>...</i></div>
<div class="t" style="left:194px;top:699.4px">Station-<i>010</i>:<i>...</i></div>
<div class="t" style="left:284px;top:699.4px">Cloud: Cloud/Mesh - <i>...</i></div>
<div class="t" style="left:434px;top:699.4px">On</div>
<div class="t" style="left:484px;top:699.4px"><i>1.0000</i></div>
<div class="t" style="left:544px;top:699.4px"><i>763000</i></div>
<div class="t" style="left:644px;top:699.4px"><i>0.005</i> m</div>
<div class="t" style="left:724px;top:699.4px">aligned [<i>0.014</i> m]</div>
<div class="t" style="left:854px;top:699.4px">n/a</div>
<div class="t" style="left:934px;top:699.4px">aligned [<i>0.014</i> m]</div>
<div class="t" style="left:1064px;top:699.4px">Group <i>1</i>/<i>...</i></div>
<svg class="a" style="left:8px;top:720px" width="16" height="9" viewBox="0 0 16 9"><path d="M0 1.2h5l3 3.3l3-3.3h5M0 7.8h5l3-3.3l3 3.3h5" stroke="#b4c400" stroke-width="2.4" fill="none"/><path d="M0 4.5h3M3.5 2.3l3 2.2l-3 2.2M6.5 2.3l3 2.2l-3 2.2M13.5 2.8l-2.5 1.7l2.5 1.7" stroke="#a8b800" stroke-width="1.7" fill="none"/><path d="M3 2.5l3 2l-3 2M11 1.5l-2 3l2 3" stroke="#5a6000" stroke-width="0.6" fill="none"/></svg>
<div class="t" style="left:31px;top:717.4px">T<i>26</i></div>
<div class="t" style="left:104px;top:717.4px">ST <i>294</i>: SW<i>...</i></div>
<div class="t" style="left:194px;top:717.4px">ST <i>298</i>: SW<i>...</i></div>
<div class="t" style="left:284px;top:717.4px">Coincident: Vertex - V<i>...</i></div>
<div class="t" style="left:434px;top:717.4px">On</div>
<div class="t" style="left:484px;top:717.4px"><i>1.0000</i></div>
<div class="t" style="left:544px;top:717.4px">n/a</div>
<div class="t" style="left:644px;top:717.4px"><i>0.005</i> m</div>
<div class="t" style="left:724px;top:717.4px">(<i>0.000,</i> <i>0.000,</i> <i>0.005...</i></div>
<div class="t" style="left:854px;top:717.4px">n/a</div>
<div class="t" style="left:934px;top:717.4px">n/a</div>
<div class="t" style="left:1064px;top:717.4px">Group <i>10</i>/<i>...</i></div>
<svg class="a" style="left:8px;top:738px" width="16" height="9" viewBox="0 0 16 9"><path d="M0 1.2h5l3 3.3l3-3.3h5M0 7.8h5l3-3.3l3 3.3h5" stroke="#b4c400" stroke-width="2.4" fill="none"/><path d="M0 4.5h3M3.5 2.3l3 2.2l-3 2.2M6.5 2.3l3 2.2l-3 2.2M13.5 2.8l-2.5 1.7l2.5 1.7" stroke="#a8b800" stroke-width="1.7" fill="none"/><path d="M3 2.5l3 2l-3 2M11 1.5l-2 3l2 3" stroke="#5a6000" stroke-width="0.6" fill="none"/></svg>
<div class="t" style="left:31px;top:735.4px">T<i>22</i></div>
<div class="t" style="left:104px;top:735.4px">Known Coo<i>...</i></div>
<div class="t" style="left:194px;top:735.4px">ST <i>283</i>: SW<i>...</i></div>
<div class="t" style="left:284px;top:735.4px">Coincident: Vertex - V<i>...</i></div>
<div class="t" style="left:434px;top:735.4px">On</div>
<div class="t" style="left:484px;top:735.4px"><i>1.0000</i></div>
<div class="t" style="left:544px;top:735.4px">n/a</div>
<div class="t" style="left:644px;top:735.4px"><i>0.005</i> m</div>
<div class="t" style="left:724px;top:735.4px">(-<i>0.002,</i> -<i>0.003,</i> <i>0.00...</i></div>
<div class="t" style="left:854px;top:735.4px">n/a</div>
<div class="t" style="left:934px;top:735.4px">n/a</div>
<div class="t" style="left:1064px;top:735.4px">Ungrouped</div>
<svg class="a" style="left:8px;top:756px" width="16" height="9" viewBox="0 0 16 9"><path d="M0 1.2h5l3 3.3l3-3.3h5M0 7.8h5l3-3.3l3 3.3h5" stroke="#b4c400" stroke-width="2.4" fill="none"/><path d="M0 4.5h3M3.5 2.3l3 2.2l-3 2.2M6.5 2.3l3 2.2l-3 2.2M13.5 2.8l-2.5 1.7l2.5 1.7" stroke="#a8b800" stroke-width="1.7" fill="none"/><path d="M3 2.5l3 2l-3 2M11 1.5l-2 3l2 3" stroke="#5a6000" stroke-width="0.6" fill="none"/></svg>
<div class="t" style="left:31px;top:753.4px">Cloud/M<i>...</i></div>
<div class="t" style="left:104px;top:753.4px">ST <i>276</i>: SW<i>...</i></div>
<div class="t" style="left:194px;top:753.4px">ST <i>131</i>: SW<i>...</i></div>
<div class="t" style="left:284px;top:753.4px">Cloud: Cloud/Mesh - <i>...</i></div>
<div class="t" style="left:434px;top:753.4px">On</div>
<div class="t" style="left:484px;top:753.4px"><i>1.0000</i></div>
<div class="t" style="left:544px;top:753.4px"><i>69033</i></div>
<div class="t" style="left:644px;top:753.4px"><i>0.005</i> m</div>
<div class="t" style="left:724px;top:753.4px">aligned [<i>0.028</i> m]</div>
<div class="t" style="left:854px;top:753.4px">n/a</div>
<div class="t" style="left:934px;top:753.4px">aligned [<i>0.028</i> m]</div>
<div class="t" style="left:1064px;top:753.4px">Group <i>6</i>/<i>...</i></div>
</div>
<div class="a" style="left:1888px;top:117px;width:18px;height:655px;background:#f0f0f0"></div>
<svg class="a" style="left:1892px;top:124px" width="11" height="8"><path d="M1 6.5 L5.5 2 L10 6.5" stroke="#606060" stroke-width="1.6" fill="none"/></svg>
<svg class="a" style="left:1892px;top:760px" width="11" height="8"><path d="M1 1.5 L5.5 6 L10 1.5" stroke="#606060" stroke-width="1.6" fill="none"/></svg>
<div class="a" style="left:1888px;top:721px;width:18px;height:21px;background:#cdcdcd"></div>
<div class="a" style="left:0;top:777px;width:1913px;height:2px;background:#3c3c3c"></div>
<div class="a" style="left:0;top:779px;width:1913px;height:2px;background:#fff"></div>
<div class="a" style="left:0;top:783px;width:1913px;height:2px;background:#7a7a7a"></div>
<div class="a" style="left:8px;top:788px;width:1px;height:214px;background:#b0b0b0"></div>
<div class="a" style="left:12px;top:788px;width:1px;height:214px;background:#b0b0b0"></div>
<div class="a" style="left:17px;top:803px;width:930px;height:200px;background:#fff"></div>
<div class="a" style="left:18px;top:804px;width:928px;height:198px;background:#000"></div>
<div class="t" style="left:17.3px;top:788.5px;font-size:14px;color:#000;transform:scaleX(0.937);transform-origin:0 0">Station-033: SW-033 (Leveled) : ControlSpace [Registration 4_GEO] : Constraint Cloud/Mesh 72</div>
<div class="a" style="left:967px;top:788px;width:1px;height:214px;background:#b0b0b0"></div>
<div class="a" style="left:971px;top:788px;width:1px;height:214px;background:#b0b0b0"></div>
<div class="a" style="left:976px;top:803px;width:936px;height:200px;background:#fff"></div>
<div class="a" style="left:977px;top:804px;width:934px;height:198px;background:#000"></div>
<div class="t" style="left:976.3px;top:788.5px;font-size:14px;color:#000;transform:scaleX(0.937);transform-origin:0 0">Station-034: SW-034 (Leveled) : ControlSpace [Registration 4_GEO] : Constraint Cloud/Mesh 72</div>
<div class="a" style="left:952px;top:785px;width:1px;height:220px;background:#fff"></div>
<div class="a" style="left:957px;top:785px;width:2px;height:220px;background:#6e6e6e"></div>
<div class="a" style="left:959px;top:785px;width:1px;height:220px;background:#fff"></div>
<svg class="a" style="left:18px;top:804px" width="928" height="198" viewBox="18 804 928 198">
<defs>
<filter id="sp" x="0" y="0" width="100%" height="100%" color-interpolation-filters="sRGB">
<feTurbulence type="fractalNoise" baseFrequency="0.9" numOctaves="1" seed="4" result="n"/>
<feColorMatrix in="n" type="matrix" values="1.9 0 0 0 0.0  1.9 0 0 0 0.0  1.9 0 0 0 0.0  0 0 0 0 1" result="g"/>
<feBlend in="SourceGraphic" in2="g" mode="multiply" result="b"/>
<feComposite in="b" in2="SourceAlpha" operator="in"/>
</filter>
<filter id="spd" x="0" y="0" width="100%" height="100%" color-interpolation-filters="sRGB">
<feTurbulence type="fractalNoise" baseFrequency="1.1" numOctaves="1" seed="7" result="n"/>
<feColorMatrix in="n" type="matrix" values="2.4 0 0 0 -0.5  2.4 0 0 0 -0.5  2.4 0 0 0 -0.5  0 0 0 0 1" result="g"/>
<feBlend in="SourceGraphic" in2="g" mode="multiply" result="b"/>
<feComposite in="b" in2="SourceAlpha" operator="in"/>
</filter>
</defs>
<g filter="url(#sp)">
<path d="M286 907 L322 941 L337 937 L300 915 Z" fill="#58e020"/>
<path d="M316 932 L337 936 L340 943 L318 942 Z" fill="#907028"/>
<path d="M342 937 L352 930 L362 936 L352 944Z" fill="#806020"/>
<path d="M356 958 L383 978 L420 957 L400 940 L372 926 Z" fill="#6a5a18"/>
<path d="M358 957 L383 978 L386 973 L363 955Z" fill="#58e030"/>
<path d="M366 948 L396 936 M370 956 L402 944 M376 964 L408 950" stroke="#b09040" stroke-width="1.2"/>
<path d="M334 906 L338 903 L352 926 L348 929Z" fill="#50c848"/><path d="M341 911 L343 909 L346 916 L344 918Z" fill="#d07030"/>
<path d="M331 876 L404 828 L503 863 L485 926 L450 975 L421 961 L400 968 L385 954 Z" fill="#60d820"/><path d="M331 876 L337 874 L391 951 L385 954Z" fill="#80f040"/>
<path d="M331 876 L404 828 L410 834 L338 882Z" fill="#80f030"/>
<path d="M340 882 L406 836 L418 872 L383 904 Z" fill="#58c828"/>
<path d="M372 870 L380 865 L382 870 L374 874Z" fill="#40b0a0"/>
<path d="M406 836 L500 868 L473 896 L418 872 Z" fill="#a09030"/>
<path d="M440 850 L480 866 L470 880 L448 866Z" fill="#c06830"/>
<path d="M406 836 L430 844 L432 880 L418 872Z" fill="#70c830"/>
<path d="M473 896 L500 868 L486 926 L460 932 Z" fill="#c87030"/>
<path d="M377 918 L383 904 L444 936 L450 975 L421 961 L420 940 Z" fill="#88c830"/><path d="M372 928 L378 918 L420 940 L421 961 L400 968 L388 950Z" fill="#5a5018"/><path d="M380 932 L412 948 M384 940 L414 955 M390 948 L416 962" stroke="#a09030" stroke-width="1.2"/>
<path d="M414 942 L432 948 L434 955 L416 950Z" fill="#3aa0b0"/>
<path d="M430 946 L448 950 L450 972Z" fill="#c09030"/>
</g>
<g filter="url(#spd)">
<path d="M383 904 L418 872 L473 896 L444 936 Z" fill="#706018"/>
<path d="M447 934 L472 908 L478 926 L458 958 Z" fill="#403810"/>
</g>
<g filter="url(#sp)">
<path d="M480 876 L503 863 L497 922 L488 934 L482 905 Z" fill="#a0b030"/>
<path d="M481 900 L490 890 L494 925 L487 934Z" fill="#d86020"/><path d="M495 866 L503 863 L500 885 L494 888Z" fill="#e07030"/>
<path d="M504 859 L539 804 L585 804 L549 855 Z" fill="#8a7a28"/>
<path d="M504 859 L533 822 L539 840 L512 869 Z" fill="#e87020"/>
<path d="M508 850 L530 818 L533 824 L512 856Z" fill="#f09030"/>
<path d="M536 804 L585 804 L578 814 L540 812 Z" fill="#78e030"/>
<path d="M545 812 L560 812 L548 838Z" fill="#60d030"/>
<path d="M553 820 L560 816 L562 840 L556 844Z" fill="#30a0c0"/>
<path d="M504 883 L591 879 L630 893 L606 922 L569 922 L555 938 L549 968 L492 928 Z" fill="#807a24"/>
<path d="M504 883 L591 879 L630 893 L605 905 L520 905 Z" fill="#78b030"/>
<path d="M492 928 L549 968 L555 938 L512 916 Z" fill="#a08028"/>
<path d="M640 1002 L668 971 L846 938 L771 973 L735 992 L711 1002 Z" fill="#60e028"/><path d="M680 968 L846 938 L820 950 L690 975Z" fill="#80f040"/>
<path d="M660 1002 L700 988 L770 975 L735 992 L711 1002Z" fill="#c0c828"/><path d="M700 996 L740 984 L752 982 L730 994Z" fill="#e09030"/>
<path d="M605 968 L616 965 L620 974 L608 976Z" fill="#90e040"/>
</g>
<g filter="url(#spd)">
<path d="M555 936 L622 958 L668 972 L658 997 L640 1002 L598 1002 L555 968 Z" fill="#3c3010"/>
<path d="M620 957 L668 970 L672 984 L632 980 Z" fill="#d88028"/>
</g>
<clipPath id="corr"><path d="M504 883 L591 879 L630 893 L606 922 L569 922 L555 938 L549 968 L492 928 Z"/></clipPath><g stroke="#c08830" stroke-width="0.9" opacity="0.8" clip-path="url(#corr)"><path d="M520 884.0 L500 930"/><path d="M533 884.5 L513 932"/><path d="M546 885.0 L526 934"/><path d="M559 885.5 L539 936"/><path d="M572 886.0 L552 938"/><path d="M585 886.5 L565 940"/><path d="M598 887.0 L578 942"/><path d="M611 887.5 L591 944"/></g>
<g stroke-linecap="round">
<path d="M663 911 L707 942 M688 914 L750 953 M713 918 L770 949 M741 922 L789 946 M771 926 L807 944 M802 931 L825 940 M837 935 L843 938" stroke="#e83818" stroke-width="3"/>
<path d="M640 906 L691 968" stroke="#e03818" stroke-width="3"/>
<path d="M650 916 L665 936" stroke="#a0b040" stroke-width="3"/>
<path d="M626 944 L664 938 M630 951 L660 947 M626 934 L640 930" stroke="#801810" stroke-width="2.5" opacity="0.8"/>
<path d="M580 912 L612 922" stroke="#a02010" stroke-width="2.5"/>
<path d="M563 857 L580 836 M576 833 L584 820" stroke="#40b030" stroke-width="1.5"/>
<path d="M597 930 L610 912 M548 960 L553 944 M518 936 L522 920" stroke="#60e040" stroke-width="2"/>
</g>
<g>
<path d="M478 903 L502 903" stroke="#f02020" stroke-width="2.5"/>
<path d="M502 899 L511 903 L502 907Z" fill="#fff"/>
<path d="M478 886 L488 880 L487 892Z" fill="#f8f8f0"/><path d="M484 903 L500 888" stroke="#e0e0d0" stroke-width="1.5"/>
<text x="490" y="895.5" font-family="Liberation Sans" font-weight="bold" font-size="17.5" fill="#1414f0" stroke="#000050" stroke-width="0.6" paint-order="stroke">Z</text>
<text x="510" y="910" font-family="Liberation Sans" font-weight="bold" font-size="17.5" fill="#f01414" stroke="#500000" stroke-width="0.6" paint-order="stroke">X</text>
<text x="513" y="880.5" font-family="Liberation Sans" font-weight="bold" font-size="16" letter-spacing="2.3" fill="#f4f400" stroke="#202000" stroke-width="0.8" paint-order="stroke">Scanner</text>
</g>
</svg>
<svg class="a" style="left:977px;top:804px" width="934" height="198" viewBox="977 804 934 198">
<defs>
<filter id="sp2" x="0" y="0" width="100%" height="100%" color-interpolation-filters="sRGB">
<feTurbulence type="fractalNoise" baseFrequency="0.9" numOctaves="1" seed="9" result="n"/>
<feColorMatrix in="n" type="matrix" values="1.9 0 0 0 0.05  1.9 0 0 0 0.05  1.9 0 0 0 0.05  0 0 0 0 1" result="g"/>
<feBlend in="SourceGraphic" in2="g" mode="multiply" result="b"/>
<feComposite in="b" in2="SourceAlpha" operator="in"/>
</filter>
</defs>
<g filter="url(#sp2)">
<path d="M1245 907 L1283 941 L1290 940 L1255 915 Z" fill="#50e020"/>
<path d="M1277 931 L1302 934 L1303 943 L1280 942 Z" fill="#b07a28"/>
<path d="M1295 905 L1310 923 L1313 921 L1298 903Z" fill="#40d050"/>
<path d="M1262 918 L1266 926 M1268 934 L1272 938" stroke="#50d030" stroke-width="2"/>
<path d="M1292 876 L1369 827 L1469 863 L1449 928 L1412 976 L1382 958 L1351 986 L1323 960 L1329 938 L1305 903 Z" fill="#70f038"/>
<path d="M1298 880 L1369 834 L1380 872 L1330 896 Z" fill="#58e858"/>
<path d="M1310 880 L1350 860 L1340 885Z" fill="#40d8a0"/>
<path d="M1369 834 L1462 866 L1430 890 L1378 873 Z" fill="#90e838"/>
<path d="M1375 845 L1395 850 L1400 870 L1385 862Z" fill="#d0b040"/>
<path d="M1420 860 L1440 866 L1438 880 L1424 872Z" fill="#c8a040"/>
<path d="M1330 896 L1378 873 L1430 890 L1396 933 Z" fill="#b8b030"/>
<path d="M1330 896 L1396 933 L1392 938 L1326 901Z" fill="#70f040"/>
<path d="M1396 933 L1430 890 L1449 928 L1412 976 Z" fill="#88e838"/>
<path d="M1336 925 L1356 931 L1354 941 L1338 936Z" fill="#8a8028"/>
<path d="M1323 960 L1351 986 L1382 958 L1351 950 Z" fill="#c8c830"/>
<path d="M1320 960 L1350 987 L1355 982 L1326 957Z" fill="#50e030"/>
<path d="M1385 943 L1403 950 L1405 954 L1387 948Z" fill="#30b0c8"/>
<path d="M1440 905 L1466 888 L1462 925 L1445 935 Z" fill="#e07020"/>
<path d="M1448 900 L1458 896 L1456 915 L1450 920Z" fill="#90d030"/>
<path d="M1462 887 L1509 891 L1578 901 L1568 918 L1554 948 L1456 930 L1450 918 Z" fill="#a8a030"/>
<path d="M1462 887 L1530 903 L1525 935 L1456 928 Z" fill="#d0c038"/>
<path d="M1509 891 L1578 901 L1568 918 L1531 903 Z" fill="#70e030"/>
<path d="M1531 903 L1566 922 L1554 948 L1525 936 Z" fill="#000"/>
<path d="M1525 936 L1554 948 L1560 940 L1566 922 L1570 925 L1556 950Z" fill="#60d030"/>
<path d="M1525 1002 L1530 990 L1540 984 L1548 1002 Z" fill="#70d020"/>
</g>
<g filter="url(#spd)">
<ellipse cx="1411" cy="920" rx="12" ry="10" fill="#5a4a18"/>
<path d="M1414 936 L1426 928 L1423 938Z" fill="#6a5818"/>
<path d="M1335 970 L1362 957 M1332 964 L1358 951 M1343 978 L1370 964" stroke="#302a08" stroke-width="1.6"/>
</g>
<g stroke-linecap="round">
<path d="M1537 913 L1566 924" stroke="#e02818" stroke-width="2.5"/>
<path d="M1566 805 L1553 839" stroke="#50d030" stroke-width="3.5"/>
<path d="M1576 808 L1557 851" stroke="#d09020" stroke-width="1.2"/>
<path d="M1523 859 L1551 843 M1528 866 L1540 860 M1510 862 L1516 857" stroke="#e08020" stroke-width="1.5"/>
<path d="M1499 851 L1495 875" stroke="#50e030" stroke-width="3"/>
<path d="M1464 870 L1472 875" stroke="#e03020" stroke-width="2.5"/>
</g>
<g>
<path d="M1410 895 L1418 886 L1420 898Z" fill="#e0f0c0"/>
<text x="1416.5" y="899.5" font-family="Liberation Sans" font-weight="bold" font-size="17.5" fill="#1414f0" stroke="#000040" stroke-width="0.9" paint-order="stroke">Z</text>
<path d="M1428 897 L1434 886" stroke="#40c040" stroke-width="2"/>
<text x="1441" y="914.5" font-family="Liberation Sans" font-weight="bold" font-size="17.5" fill="#f01414" stroke="#400" stroke-width="0.9" paint-order="stroke">X</text>
<text x="1443" y="885" font-family="Liberation Sans" font-weight="bold" font-size="16" letter-spacing="2.3" fill="#f4f400" stroke="#303000" stroke-width="1.6" paint-order="stroke">Scanner</text>
</g>
</svg>

<div class="a" style="left:835px;top:972px;width:101px;height:16px;border:1px solid #5cc4bc"></div>
<div class="t" style="left:840px;top:975px;font-size:10.7px;color:#54c0b4">Transparent Points</div>
<div class="a" style="left:1800px;top:972px;width:101px;height:16px;border:1px solid #5cc4bc"></div>
<div class="t" style="left:1805px;top:975px;font-size:10.7px;color:#54c0b4">Transparent Points</div>
<div class="a" style="left:0;top:1006px;width:1913px;height:1px;background:#a0a0a0"></div>
<div class="t" style="left:1px;top:1011px;font-size:14px;color:#000;transform:scaleX(0.963);transform-origin:0 0">ScanWorlds are registered and frozen</div>
</body></html>
